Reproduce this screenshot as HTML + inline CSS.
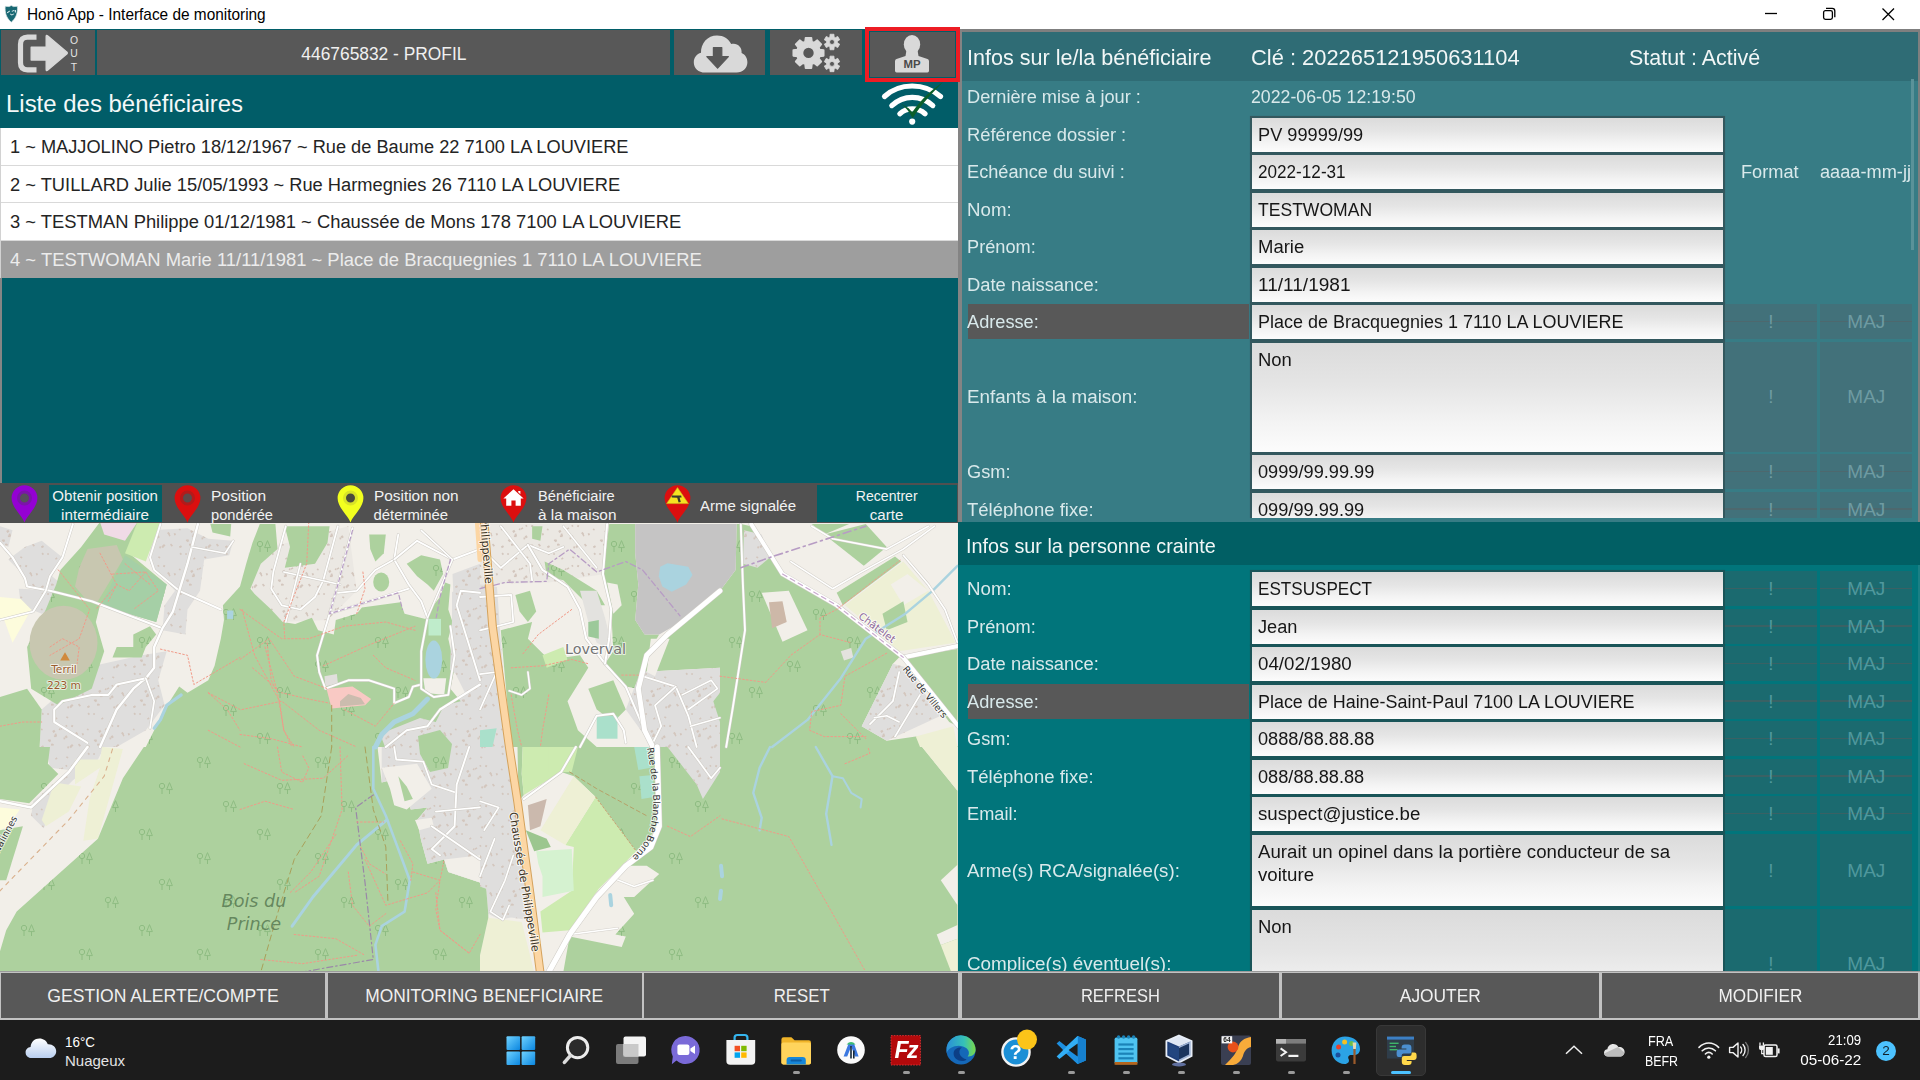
<!DOCTYPE html>
<html lang="fr"><head><meta charset="utf-8">
<title>Honō App - Interface de monitoring</title>
<style>

*{box-sizing:border-box;margin:0;padding:0}
html,body{width:1920px;height:1080px;overflow:hidden;background:#fff}
#root{position:absolute;left:0;top:0;width:1920px;height:1080px;overflow:hidden;opacity:.999}
body{position:relative;font-family:"Liberation Sans",sans-serif;color:#fff;-webkit-font-smoothing:antialiased}
.a{position:absolute}
.t{position:absolute;white-space:nowrap;line-height:1}
svg{position:absolute;overflow:visible}
/* title bar */
#tb{left:0;top:0;width:1920px;height:29px;background:#fff;color:#000}
#tb .ttl{left:27.4px;top:0;height:29px;line-height:29px;font-size:15.7px;color:#000;transform:scaleX(.981);transform-origin:left center}
/* left */
#left{left:0;top:29px;width:958px;height:942px;background:#005d68;overflow:hidden}
.gbtn{background:#585858}
#lhead{left:6.4px;top:60px;font-size:24.6px;line-height:30px;color:#f4f8f8}
#list{left:0;top:99px;width:958px;height:150px;background:#fff;border-left:1px solid #d2d2d2}
.li{left:0;width:957px;height:37.5px;line-height:37.5px;color:#242424;font-size:19.2px;padding-left:8.6px;white-space:nowrap;border-bottom:1px solid #d9d9d9}
.li.sel{background:#9e9e9e;color:#ececec;border-bottom:none}
#legend{left:0;top:453.5px;width:958px;height:40.2px;background:#505050;z-index:2}
.lg{font-size:14.9px;line-height:19.2px;color:#f2f2f2;white-space:nowrap;position:absolute}
.tbtn{background:#005f66;position:absolute;text-align:center}
#map{left:0;top:493px;width:958px;height:449px;background:#f2efe9;overflow:hidden}
/* splitter */
#split{left:957.5px;top:29px;width:5px;height:493px;background:#848484}
/* right top */
#rt{left:962px;top:29px;width:958px;height:493px;background:#377c85;overflow:hidden}
#rthead{left:0;top:2px;width:958px;height:49px;background:#2f6c75}
#rb{left:957.5px;top:522px;width:962.5px;height:449px;background:#00757b;overflow:hidden}
#rbhead{left:0;top:0;width:962.5px;height:42.5px;background:#005f64}
.h{font-size:22px;color:#f2f7f7}
.lb{font-size:19.2px;color:#d9e9eb}
.f{position:absolute;background:linear-gradient(#dbdbdb 0%,#e5e5e5 38%,#f3f3f3 72%,#fcfcfc 100%);color:#161616;font-size:19.2px;padding:4.9px 0 0 6px;line-height:23px;white-space:nowrap;overflow:hidden}
.d{position:absolute;text-align:center;font-size:19px;white-space:nowrap}
.d1{background:#42717a;color:#6e9ba2}
.d2{background:#1b6a6f;color:#4f989d}
.d{z-index:0}
.d i{position:absolute;left:0;right:0;top:50%;height:1.5px;margin-top:-1px;display:block;z-index:-1}
.d1 i{background:#4d686e}
.d2 i{background:#3a6164}
/* bottom buttons */
#bb{left:0;top:971px;width:1920px;height:49px;background:#c2c2c2}
.bbtn{position:absolute;top:1.5px;height:45.5px;background:#585858;text-align:center;line-height:46px;font-size:19px;color:#f0f0f0;white-space:nowrap}
/* taskbar */
#task{left:0;top:1020px;width:1920px;height:60px;background:#1c1c1c;font-family:"Liberation Sans",sans-serif}
#rt .f{box-shadow:0 0 .7px 1.75px #33585e}
#rb .f{box-shadow:0 0 .7px 1.75px #1a5559}

</style></head>
<body><div id="root">
<div id="tb" class="a">
<svg style="left:4.4px;top:4.8px" width="15" height="18" viewBox="0 0 15 18"><path d="M7.3 .5 L9.4 1.6 L13.4 1.3 C13.9 7.2 12.4 13.2 7.3 17.2 C2.2 13.2 .7 7.2 1.2 1.3 L5.2 1.6 Z" fill="#186873" stroke="#dfe9ea" stroke-width=".7"/><path d="M2.8 7.4 L5.6 5.6 L5.9 6.4 L3.4 8.2Z M7.6 6 L10 4.9 L10.4 5.8 L8 6.8Z M10.6 5.2 L12 5 L11.9 7.6 L10.9 7.6Z M6.4 8.6 L7.8 9.6 L10 8.4 L10.3 9 L7.8 10.6 L6 9.2Z" fill="#e4eff0"/></svg>
<div class="t ttl">Honō App - Interface de monitoring</div>
<svg style="left:1764px;top:6px" width="150" height="18" viewBox="0 0 150 18" fill="none" stroke="#000" stroke-width="1.3">
<path d="M1 7.5H13"/>
<rect x="59.6" y="4.6" width="8.8" height="8.8" rx="1.8"/><path d="M62 2.4H68.2Q70.8 2.4 70.8 5V11.2"/>
<path d="M118.5 2.5L130 14M130 2.5L118.5 14"/>
</svg>
</div>
<div id="left" class="a">
<div class="a gbtn" style="left:1.3px;top:.6px;width:93.4px;height:45.7px"></div>
<div class="a gbtn" style="left:97.3px;top:.6px;width:572.7px;height:45.7px"></div>
<div class="a gbtn" style="left:673.9px;top:.6px;width:91.6px;height:45.7px"></div>
<div class="a gbtn" style="left:769.5px;top:.6px;width:92px;height:45.7px"></div>
<div class="a gbtn" style="left:870px;top:3px;width:85px;height:44.5px"></div>
<svg style="left:0;top:0" width="96" height="48" viewBox="0 0 96 48"><path d="M36.5 8.2H27.5Q20.5 8.2 20.5 15.2V33.8Q20.5 40.8 27.5 40.8H36.5" fill="none" stroke="#d9d9d9" stroke-width="5.2"/><path d="M31.2 18.3H46.2V7.6Q46.2 5.6 47.8 7L67 23.2Q67.6 24 67 24.8L47.8 41Q46.2 42.4 46.2 40.4V31H31.2Z" fill="#d9d9d9" stroke="#d9d9d9" stroke-width="1.4" stroke-linejoin="round"/><g font-family="Liberation Sans,sans-serif" font-size="10.4" fill="#e4e4e4" text-anchor="middle"><text x="74" y="15.4">O</text><text x="74" y="28.2">U</text><text x="74" y="41.8">T</text></g></svg>
<div class="t" style="left:97.3px;top:1px;width:572.7px;height:45px;line-height:47.5px;text-align:center;font-size:18.3px;color:#f0f0f0"><span style="display:inline-block;transform:scaleX(0.950);transform-origin:center center">446765832 - PROFIL</span></div>
<svg style="left:673.5px;top:1px" width="92" height="45" viewBox="0 0 92 45"><path d="M31 42.5 C24.5 42.5 19.8 38.2 19.8 32.4 C19.8 27.6 22.8 24 27 22.8 C26.6 13.2 33.6 5.4 43 5.4 C49.6 5.4 54.6 8.8 57.2 14 C63 12.4 68.2 16.8 67.6 23 C71.4 24.6 73.4 28.2 73.4 32.2 C73.4 38 69 42.5 62.6 42.5Z" fill="#d9d9d9"/><path d="M39.4 17.6H47.8V26.6H54.4L43.6 38.2L32.8 26.6H39.4Z" fill="#585858" stroke="#585858" stroke-width="1.2" stroke-linejoin="round"/></svg>
<svg style="left:769.5px;top:1px" width="92" height="45" viewBox="0 0 92 45"><path d="M49.68 19.46 L53.72 19.96 L53.72 25.84 L49.68 26.34 L48.84 28.37 L51.34 31.58 L47.18 35.74 L43.97 33.24 L41.94 34.08 L41.44 38.12 L35.56 38.12 L35.06 34.08 L33.03 33.24 L29.82 35.74 L25.66 31.58 L28.16 28.37 L27.32 26.34 L23.28 25.84 L23.28 19.96 L27.32 19.46 L28.16 17.43 L25.66 14.22 L29.82 10.06 L33.03 12.56 L35.06 11.72 L35.56 7.68 L41.44 7.68 L41.94 11.72 L43.97 12.56 L47.18 10.06 L51.34 14.22 L48.84 17.43Z M44.50 22.90 A6.00 6.00 0 1 0 32.50 22.90 A6.00 6.00 0 1 0 44.50 22.90 Z" fill="#d9d9d9" fill-rule="evenodd" stroke="#d9d9d9" stroke-width="1.6" stroke-linejoin="round"/><path d="M67.45 12.75 L69.70 14.18 L67.73 17.58 L65.37 16.35 L64.08 17.09 L63.96 19.76 L60.04 19.76 L59.92 17.09 L58.63 16.35 L56.27 17.58 L54.30 14.18 L56.55 12.75 L56.55 11.25 L54.30 9.82 L56.27 6.42 L58.63 7.65 L59.92 6.91 L60.04 4.24 L63.96 4.24 L64.08 6.91 L65.37 7.65 L67.73 6.42 L69.70 9.82 L67.45 11.25Z M64.50 12.00 A2.50 2.50 0 1 0 59.50 12.00 A2.50 2.50 0 1 0 64.50 12.00 Z" fill="#d9d9d9" fill-rule="evenodd" stroke="#d9d9d9" stroke-width=".8" stroke-linejoin="round"/><path d="M67.45 34.65 L69.70 36.08 L67.73 39.48 L65.37 38.25 L64.08 38.99 L63.96 41.66 L60.04 41.66 L59.92 38.99 L58.63 38.25 L56.27 39.48 L54.30 36.08 L56.55 34.65 L56.55 33.15 L54.30 31.72 L56.27 28.32 L58.63 29.55 L59.92 28.81 L60.04 26.14 L63.96 26.14 L64.08 28.81 L65.37 29.55 L67.73 28.32 L69.70 31.72 L67.45 33.15Z M64.50 33.90 A2.50 2.50 0 1 0 59.50 33.90 A2.50 2.50 0 1 0 64.50 33.90 Z" fill="#d9d9d9" fill-rule="evenodd" stroke="#d9d9d9" stroke-width=".8" stroke-linejoin="round"/></svg>
<svg style="left:870px;top:3px" width="85" height="45" viewBox="0 0 85 45"><ellipse cx="42" cy="12.4" rx="8.2" ry="9.4" fill="#d9d9d9"/><path d="M36.5 18 L47.5 18 L48.5 24 L57.5 27 Q59 27.6 59 29.2 V38.8 Q59 40.4 57.4 40.4 H26.6 Q25 40.4 25 38.8 V29.2 Q25 27.6 26.5 27 L35.5 24Z" fill="#d9d9d9"/><text x="42" y="36.2" text-anchor="middle" font-family="Liberation Sans,sans-serif" font-weight="bold" font-size="11.4" fill="#4a4a4a">MP</text></svg>
<div id="lhead" class="t"><span style="display:inline-block;transform:scaleX(0.974);transform-origin:left center">Liste des bénéficiaires</span></div>
<svg style="left:878px;top:52px" width="70" height="46" viewBox="0 0 70 46"><g fill="none" stroke="#fff" stroke-width="5.2" stroke-linecap="round"><path d="M6.5 15.5 C21.5 1.5 46.5 1.5 62.5 15.5"/><path d="M13.8 24.6 C25.5 13.5 43 13.5 54.8 24.6"/><path d="M21.8 32.8 C28.8 26.3 39.8 26.3 47 32.8"/></g><circle cx="34.2" cy="40.6" r="3.1" fill="#fff"/><path d="M23 22.8 L30.6 27.2 L34.2 31.2 C44 17.5 54 8.5 65 1 C54 12 43 24 34.6 37.2 C31.8 31.6 28 26.6 23 22.8Z" fill="#0b5f2a"/></svg>
<div id="list" class="a">
<div class="a li" style="top:0px"><span style="display:inline-block;transform:scaleX(0.949);transform-origin:left center">1 ~ MAJJOLINO Pietro 18/12/1967 ~ Rue de Baume 22 7100 LA LOUVIERE</span></div>
<div class="a li" style="top:37.5px"><span style="display:inline-block;transform:scaleX(0.953);transform-origin:left center">2 ~ TUILLARD Julie 15/05/1993 ~ Rue Harmegnies 26 7110 LA LOUVIERE</span></div>
<div class="a li" style="top:75px"><span style="display:inline-block;transform:scaleX(0.957);transform-origin:left center">3 ~ TESTMAN Philippe 01/12/1981 ~ Chaussée de Mons 178 7100 LA LOUVIERE</span></div>
<div class="a li sel" style="top:112.5px"><span style="display:inline-block;transform:scaleX(0.960);transform-origin:left center">4 ~ TESTWOMAN Marie 11/11/1981 ~ Place de Bracquegnies 1 7110 LA LOUVIERE</span></div>
</div>
<div class="a" style="left:0;top:248.6px;width:2.3px;height:206px;background:#858585"></div>
<div id="legend" class="a">
<svg style="left:10.8px;top:2px" width="27" height="38" viewBox="0 0 27 38"><path d="M13.5 37.6 C11.5 31 .6 22.5 .6 13.2 A12.9 12.9 0 0 1 26.4 13.2 C26.4 22.5 15.5 31 13.5 37.6Z" fill="#9400d3"/><circle cx="13.5" cy="13" r="6" fill="#56505a" stroke="#7b14aa" stroke-width="3"/></svg>
<svg style="left:173.7px;top:2px" width="27" height="38" viewBox="0 0 27 38"><path d="M13.5 37.6 C11.5 31 .6 22.5 .6 13.2 A12.9 12.9 0 0 1 26.4 13.2 C26.4 22.5 15.5 31 13.5 37.6Z" fill="#dc0f0f"/><circle cx="13.5" cy="13" r="6" fill="#5e4a4a" stroke="#b41a1a" stroke-width="3"/></svg>
<svg style="left:336.9px;top:2px" width="27" height="38" viewBox="0 0 27 38"><path d="M13.5 37.6 C11.5 31 .6 22.5 .6 13.2 A12.9 12.9 0 0 1 26.4 13.2 C26.4 22.5 15.5 31 13.5 37.6Z" fill="#f2ff1f"/><circle cx="13.5" cy="13" r="6" fill="#4a4a3c" stroke="#d9e428" stroke-width="3"/></svg>
<svg style="left:500.2px;top:2px" width="27" height="38" viewBox="0 0 27 38"><path d="M13.5 37.6 C11.5 31 .6 22.5 .6 13.2 A12.9 12.9 0 0 1 26.4 13.2 C26.4 22.5 15.5 31 13.5 37.6Z" fill="#dc0f0f"/><path d="M13.5 4.2 L23.6 13.4 H20.8 V20.8 H15.6 V15.4 H11.4 V20.8 H6.2 V13.4 H3.4Z M18.2 6 H20.4 V9.2 L18.2 7.2Z" fill="#fff"/></svg>
<svg style="left:663.5px;top:2px" width="27" height="38" viewBox="0 0 27 38"><path d="M13.5 37.6 C11.5 31 .6 22.5 .6 13.2 A12.9 12.9 0 0 1 26.4 13.2 C26.4 22.5 15.5 31 13.5 37.6Z" fill="#dc0f0f"/><path d="M13.5 2.6 L24.4 18.6 H2.6Z" fill="#f5e322" stroke="#c9b81a" stroke-width=".6"/><path d="M7.6 10.4 L17.2 10.6 L17.6 12.4 L15.6 12.6 L16.8 17 L14.6 17.4 L13.2 12.8 L7.8 12.4Z" fill="#3a3a2a"/></svg>
<div class="tbtn" style="left:49px;top:2.5px;width:113px;height:37px"></div>
<div class="lg" style="left:49px;top:4px;width:113px;text-align:center"><span style="display:inline-block;transform:scaleX(1.012);transform-origin:center center">Obtenir position</span><br><span style="display:inline-block;transform:scaleX(1.022);transform-origin:center center">intermédiaire</span></div>
<div class="lg" style="left:211px;top:4px"><span style="display:inline-block;transform:scaleX(1.040);transform-origin:left center">Position</span><br><span style="display:inline-block;transform:scaleX(0.985);transform-origin:left center">pondérée</span></div>
<div class="lg" style="left:373.5px;top:4px"><span style="display:inline-block;transform:scaleX(1.032);transform-origin:left center">Position non</span><br>déterminée</div>
<div class="lg" style="left:537.5px;top:4px"><span style="display:inline-block;transform:scaleX(0.986);transform-origin:left center">Bénéficiaire</span><br><span style="display:inline-block;transform:scaleX(1.030);transform-origin:left center">à la maison</span></div>
<div class="lg" style="left:700.3px;top:14.6px"><span style="display:inline-block;transform:scaleX(1.009);transform-origin:left center">Arme signalée</span></div>
<div class="tbtn" style="left:817px;top:2.5px;width:140px;height:37px"></div>
<div class="lg" style="left:817px;top:4px;width:140px;text-align:center"><span style="display:inline-block;transform:scaleX(0.945);transform-origin:center center">Recentrer</span><br><span style="display:inline-block;transform:scaleX(1.010);transform-origin:center center">carte</span></div>
</div>
<div id="map" class="a"><svg style="left:0;top:0" width="958" height="449" viewBox="0 0 958 449"><defs><pattern id="trees" patternUnits="userSpaceOnUse" width="118" height="96" x="10" y="6"><g fill="none" stroke="#8ebc82" stroke-width="1"><circle cx="14" cy="16" r="2.7"/><path d="M14 18.7V24"/><path d="M21.5 12.6L24.4 19.6H18.6ZM21.5 19.6V24"/></g><g fill="none" stroke="#8ebc82" stroke-width="1"><circle cx="72" cy="40" r="2.7"/><path d="M72 42.7V48"/><path d="M79.5 36.6L82.4 43.6H76.6ZM79.5 43.6V48"/></g><g fill="none" stroke="#8ebc82" stroke-width="1"><circle cx="34" cy="66" r="2.7"/><path d="M34 68.7V74"/><path d="M41.5 62.6L44.4 69.6H38.6ZM41.5 69.6V74"/></g><g fill="none" stroke="#8ebc82" stroke-width="1"><circle cx="98" cy="84" r="2.7"/><path d="M98 86.7V92"/><path d="M105.5 80.6L108.4 87.6H102.6ZM105.5 87.6V92"/></g></pattern><pattern id="bld" patternUnits="userSpaceOnUse" width="46" height="40"><rect x="14.6" y="6.4" width="2.4" height="1.5" fill="#d3c6bd" transform="rotate(-30 14.6 6.4)"/><rect x="5.0" y="22.0" width="2.7" height="1.6" fill="#d3c6bd" transform="rotate(0 5.0 22.0)"/><rect x="19.2" y="3.5" width="1.7" height="1.8" fill="#d3c6bd" transform="rotate(-30 19.2 3.5)"/><rect x="6.2" y="9.0" width="2.4" height="2.3" fill="#d3c6bd" transform="rotate(-30 6.2 9.0)"/><rect x="25.6" y="2.8" width="1.9" height="2.0" fill="#d3c6bd" transform="rotate(20 25.6 2.8)"/><rect x="13.2" y="6.2" width="1.7" height="1.7" fill="#d3c6bd" transform="rotate(20 13.2 6.2)"/><rect x="5.3" y="21.6" width="1.8" height="1.5" fill="#d3c6bd" transform="rotate(0 5.3 21.6)"/><rect x="24.7" y="23.3" width="2.2" height="1.9" fill="#d3c6bd" transform="rotate(45 24.7 23.3)"/><rect x="20.6" y="34.2" width="2.0" height="1.6" fill="#d3c6bd" transform="rotate(20 20.6 34.2)"/><rect x="30.4" y="9.8" width="2.3" height="1.9" fill="#d3c6bd" transform="rotate(45 30.4 9.8)"/><rect x="31.6" y="11.4" width="2.8" height="1.5" fill="#d3c6bd" transform="rotate(70 31.6 11.4)"/><rect x="7.9" y="13.3" width="2.7" height="1.8" fill="#d3c6bd" transform="rotate(0 7.9 13.3)"/><rect x="33.1" y="21.6" width="2.7" height="1.7" fill="#d3c6bd" transform="rotate(45 33.1 21.6)"/><rect x="26.0" y="21.9" width="2.1" height="2.2" fill="#d3c6bd" transform="rotate(45 26.0 21.9)"/><rect x="20.9" y="24.9" width="1.7" height="2.1" fill="#d3c6bd" transform="rotate(-30 20.9 24.9)"/><rect x="42.7" y="30.6" width="1.9" height="1.8" fill="#d3c6bd" transform="rotate(45 42.7 30.6)"/><rect x="1.9" y="17.6" width="1.8" height="1.5" fill="#d3c6bd" transform="rotate(0 1.9 17.6)"/><rect x="10.2" y="11.3" width="2.5" height="1.8" fill="#d3c6bd" transform="rotate(70 10.2 11.3)"/><rect x="4.4" y="17.2" width="2.3" height="2.3" fill="#d3c6bd" transform="rotate(70 4.4 17.2)"/><rect x="37.3" y="11.0" width="2.1" height="1.8" fill="#d3c6bd" transform="rotate(70 37.3 11.0)"/><rect x="41.2" y="6.4" width="1.8" height="1.6" fill="#d3c6bd" transform="rotate(20 41.2 6.4)"/><rect x="1.5" y="30.9" width="1.8" height="1.7" fill="#d3c6bd" transform="rotate(20 1.5 30.9)"/><rect x="18.6" y="14.3" width="2.3" height="2.4" fill="#d3c6bd" transform="rotate(-30 18.6 14.3)"/><rect x="40.9" y="24.6" width="2.5" height="1.9" fill="#d3c6bd" transform="rotate(-30 40.9 24.6)"/><rect x="17.5" y="15.4" width="1.7" height="2.0" fill="#d3c6bd" transform="rotate(0 17.5 15.4)"/><rect x="9.0" y="36.4" width="2.1" height="1.5" fill="#d3c6bd" transform="rotate(-30 9.0 36.4)"/></pattern></defs><polygon points="8.3,37.5 25.0,25.0 41.7,18.8 62.5,35.4 52.1,54.2 68.8,68.8 41.7,68.8 27.1,64.6 22.9,52.1" fill="#dfdedd"/><polygon points="8.3,37.5 25.0,25.0 41.7,18.8 62.5,35.4 52.1,54.2 68.8,68.8 41.7,68.8 27.1,64.6 22.9,52.1" fill="url(#bld)"/><polygon points="18.8,66.7 68.8,68.8 62.5,83.3 41.7,91.7 20.8,83.3" fill="#dfdedd"/><polygon points="18.8,66.7 68.8,68.8 62.5,83.3 41.7,91.7 20.8,83.3" fill="url(#bld)"/><polygon points="0.0,4.2 12.5,8.3 8.3,25.0 0.0,20.8" fill="#dfdedd"/><polygon points="0.0,4.2 12.5,8.3 8.3,25.0 0.0,20.8" fill="url(#bld)"/><polygon points="150.0,8.3 187.5,6.2 208.3,16.7 233.3,18.8 229.2,33.3 204.2,37.5 200.0,68.8 187.5,87.5 185.4,112.5 162.5,108.3 164.6,83.3 175.0,68.8 150.0,41.7" fill="#dfdedd"/><polygon points="150.0,8.3 187.5,6.2 208.3,16.7 233.3,18.8 229.2,33.3 204.2,37.5 200.0,68.8 187.5,87.5 185.4,112.5 162.5,108.3 164.6,83.3 175.0,68.8 150.0,41.7" fill="url(#bld)"/><polygon points="93.8,143.8 141.7,133.3 166.7,129.2 158.3,158.3 164.6,183.3 145.8,208.3 116.7,225.0 39.6,225.0 41.7,187.5 58.3,172.9 91.7,166.7" fill="#dfdedd"/><polygon points="93.8,143.8 141.7,133.3 166.7,129.2 158.3,158.3 164.6,183.3 145.8,208.3 116.7,225.0 39.6,225.0 41.7,187.5 58.3,172.9 91.7,166.7" fill="url(#bld)"/><polygon points="45.8,225.0 104.2,225.0 97.9,237.5 72.9,258.3 56.2,275.0 43.8,306.2 31.2,293.8 33.3,279.2 68.8,247.9 50.0,245.8" fill="#dfdedd"/><polygon points="45.8,225.0 104.2,225.0 97.9,237.5 72.9,258.3 56.2,275.0 43.8,306.2 31.2,293.8 33.3,279.2 68.8,247.9 50.0,245.8" fill="url(#bld)"/><polygon points="248.3,31.2 348.3,4.2 356.7,68.8 327.5,97.9 281.7,100.0 252.5,72.9" fill="#ebe8e3"/><polygon points="248.3,31.2 348.3,4.2 356.7,68.8 327.5,97.9 281.7,100.0 252.5,72.9" fill="url(#bld)"/><polygon points="452.5,52.1 480.0,41.7 480.0,225.0 385.8,225.0 398.3,208.3 427.5,200.0 448.3,183.3 465.0,170.8 452.5,145.8 454.6,100.0" fill="#dfdedd"/><polygon points="452.5,52.1 480.0,41.7 480.0,225.0 385.8,225.0 398.3,208.3 427.5,200.0 448.3,183.3 465.0,170.8 452.5,145.8 454.6,100.0" fill="url(#bld)"/><polygon points="480.0,62.5 492.5,62.5 511.2,225.0 480.0,225.0" fill="#dfdedd"/><polygon points="480.0,62.5 492.5,62.5 511.2,225.0 480.0,225.0" fill="url(#bld)"/><polygon points="480.0,2.1 609.2,2.1 605.0,52.1 548.8,60.4 480.0,62.5" fill="#ebe8e3"/><polygon points="480.0,2.1 609.2,2.1 605.0,52.1 548.8,60.4 480.0,62.5" fill="url(#bld)"/><polygon points="480.0,225.0 507.1,225.0 517.5,329.2 525.8,391.7 500.8,397.9 488.3,391.7 486.2,366.7 480.0,364.6" fill="#dfdedd"/><polygon points="480.0,225.0 507.1,225.0 517.5,329.2 525.8,391.7 500.8,397.9 488.3,391.7 486.2,366.7 480.0,364.6" fill="url(#bld)"/><polygon points="488.3,395.8 521.7,400.0 534.2,450.0 480.0,450.0 480.0,433.3" fill="#eef0d5"/><polygon points="75.0,237.5 100.0,237.5 102.1,225.0 122.9,227.1 97.9,316.7 83.3,318.8 89.6,277.1 100.0,245.8 75.0,262.5" fill="#eef0d5"/><polygon points="54.2,260.4 81.2,264.6 68.8,289.6 45.8,304.2 41.7,297.9" fill="#eef0d5"/><polygon points="0.0,285.4 19.8,287.5 8.3,304.2 0.0,308.3" fill="#fdfcdc"/><polygon points="0.0,75.0 20.8,77.1 31.2,87.5 12.5,120.8 4.2,97.9 0.0,95.8" fill="#fdfcdc"/><polygon points="100.0,0.0 145.8,0.0 129.2,31.2 166.7,62.5 156.2,100.0 100.0,83.3 95.8,100.0 104.2,129.2 91.7,166.7 58.3,183.3 31.2,166.7 27.1,125.0 45.8,87.5 56.2,62.5 60.4,47.9 81.2,25.0" fill="#add19e"/><polygon points="100.0,0.0 145.8,0.0 129.2,31.2 166.7,62.5 156.2,100.0 100.0,83.3 95.8,100.0 104.2,129.2 91.7,166.7 58.3,183.3 31.2,166.7 27.1,125.0 45.8,87.5 56.2,62.5 60.4,47.9 81.2,25.0" fill="url(#trees)"/><polygon points="133.3,112.5 150.0,104.2 156.2,112.5 145.8,125.0 141.7,135.4 112.5,135.4 116.7,125.0 133.3,125.0" fill="#add19e"/><polygon points="133.3,112.5 150.0,104.2 156.2,112.5 145.8,125.0 141.7,135.4 112.5,135.4 116.7,125.0 133.3,125.0" fill="url(#trees)"/><polygon points="0.0,225.0 50.0,225.0 47.9,241.7 58.3,252.1 29.2,281.2 0.0,277.1" fill="#add19e"/><polygon points="0.0,225.0 50.0,225.0 47.9,241.7 58.3,252.1 29.2,281.2 0.0,277.1" fill="url(#trees)"/><polygon points="0.0,175.0 27.1,166.7 41.7,187.5 39.6,225.0 0.0,225.0" fill="#add19e"/><polygon points="0.0,308.3 22.9,304.2 6.2,358.3 0.0,358.3" fill="#add19e"/><polygon points="210.4,2.1 231.2,2.1 230.2,14.6 212.5,10.4" fill="#add19e"/><polygon points="240.0,64.6 222.9,83.3 224.0,97.9 220.8,116.7 214.6,143.8 208.3,158.3 187.5,170.8 179.2,164.6 164.6,187.5 154.2,208.3 145.8,225.0 240.0,225.0" fill="#add19e"/><polygon points="240.0,64.6 222.9,83.3 224.0,97.9 220.8,116.7 214.6,143.8 208.3,158.3 187.5,170.8 179.2,164.6 164.6,187.5 154.2,208.3 145.8,225.0 240.0,225.0" fill="url(#trees)"/><polygon points="143.8,225.0 122.9,256.2 97.9,316.7 16.7,389.6 6.2,408.3 0.0,429.2 0.0,450.0 240.0,450.0 240.0,225.0" fill="#add19e"/><polygon points="143.8,225.0 122.9,256.2 97.9,316.7 16.7,389.6 6.2,408.3 0.0,429.2 0.0,450.0 240.0,450.0 240.0,225.0" fill="url(#trees)"/><polygon points="240.0,64.6 246.2,41.7 252.5,20.8 259.8,2.1 275.4,2.1 277.5,27.1 260.8,41.7 250.4,66.7 254.6,71.9 271.2,87.5 282.7,100.0 295.2,102.1 311.9,95.8 318.1,108.3 333.8,112.5 335.8,97.9 356.7,91.7 361.9,85.4 400.4,80.2 404.6,91.7 425.4,96.9 431.7,85.4 440.0,75.0 445.2,60.4 450.4,62.5 448.3,87.5 452.5,100.0 448.3,116.7 454.6,145.8 450.4,166.7 460.8,179.2 444.2,183.3 435.8,200.0 421.2,208.3 419.2,225.0 240.0,225.0" fill="#add19e"/><polygon points="240.0,64.6 246.2,41.7 252.5,20.8 259.8,2.1 275.4,2.1 277.5,27.1 260.8,41.7 250.4,66.7 254.6,71.9 271.2,87.5 282.7,100.0 295.2,102.1 311.9,95.8 318.1,108.3 333.8,112.5 335.8,97.9 356.7,91.7 361.9,85.4 400.4,80.2 404.6,91.7 425.4,96.9 431.7,85.4 440.0,75.0 445.2,60.4 450.4,62.5 448.3,87.5 452.5,100.0 448.3,116.7 454.6,145.8 450.4,166.7 460.8,179.2 444.2,183.3 435.8,200.0 421.2,208.3 419.2,225.0 240.0,225.0" fill="url(#trees)"/><polygon points="240.0,225.0 377.5,225.0 381.7,260.4 398.3,256.2 402.5,266.7 410.8,287.5 427.5,285.4 417.1,297.9 421.2,318.8 427.5,341.7 444.2,337.5 448.3,350.0 480.0,360.4 480.0,450.0 240.0,450.0" fill="#add19e"/><polygon points="240.0,225.0 377.5,225.0 381.7,260.4 398.3,256.2 402.5,266.7 410.8,287.5 427.5,285.4 417.1,297.9 421.2,318.8 427.5,341.7 444.2,337.5 448.3,350.0 480.0,360.4 480.0,450.0 240.0,450.0" fill="url(#trees)"/><polygon points="609.2,2.1 635.2,2.1 635.2,31.2 638.3,62.5 635.2,97.9 644.6,112.5 659.2,112.5 646.7,133.3 638.3,166.7 625.8,164.6 605.0,141.7 613.3,129.2 611.2,87.5 602.9,52.1" fill="#add19e"/><polygon points="609.2,2.1 635.2,2.1 635.2,31.2 638.3,62.5 635.2,97.9 644.6,112.5 659.2,112.5 646.7,133.3 638.3,166.7 625.8,164.6 605.0,141.7 613.3,129.2 611.2,87.5 602.9,52.1" fill="url(#trees)"/><polygon points="720.0,68.8 720.0,145.8 640.4,150.0 646.7,133.3 667.5,112.5" fill="#add19e"/><polygon points="571.7,225.0 657.1,225.0 659.2,304.2 636.2,329.2 595.6,275.0 573.8,254.2 561.2,250.0" fill="#add19e"/><polygon points="571.7,225.0 657.1,225.0 659.2,304.2 636.2,329.2 595.6,275.0 573.8,254.2 561.2,250.0" fill="url(#trees)"/><polygon points="657.1,225.0 720.0,225.0 720.0,450.0 563.3,450.0 569.6,414.6 621.7,425.0 625.8,414.6 615.4,412.5 634.2,391.7 623.8,375.0 634.2,375.0 659.2,352.1 646.7,343.8 625.8,343.8 650.8,325.0 659.2,304.2" fill="#add19e"/><polygon points="657.1,225.0 720.0,225.0 720.0,450.0 563.3,450.0 569.6,414.6 621.7,425.0 625.8,414.6 615.4,412.5 634.2,391.7 623.8,375.0 634.2,375.0 659.2,352.1 646.7,343.8 625.8,343.8 650.8,325.0 659.2,304.2" fill="url(#trees)"/><polygon points="517.5,225.0 522.7,225.0 521.7,252.1 523.8,272.9 518.5,279.2" fill="#add19e"/><polygon points="740.8,2.1 751.2,4.2 782.5,52.1 836.7,83.3 901.2,133.3 892.9,141.7 861.7,204.2 886.7,218.8 915.8,214.6 960.0,225.0 720.0,225.0 720.0,68.8 735.6,47.9 736.7,2.1" fill="#add19e"/><polygon points="740.8,2.1 751.2,4.2 782.5,52.1 836.7,83.3 901.2,133.3 892.9,141.7 861.7,204.2 886.7,218.8 915.8,214.6 960.0,225.0 720.0,225.0 720.0,68.8 735.6,47.9 736.7,2.1" fill="url(#trees)"/><polygon points="720.0,225.0 922.1,225.0 957.5,268.8 957.5,450.0 720.0,450.0" fill="#add19e"/><polygon points="500.8,108.3 532.1,100.0 527.9,116.7 548.8,137.5 580.0,133.3 588.3,145.8 567.5,179.2 577.9,208.3 596.7,225.0 511.2,225.0" fill="#add19e"/><polygon points="500.8,108.3 532.1,100.0 527.9,116.7 548.8,137.5 580.0,133.3 588.3,145.8 567.5,179.2 577.9,208.3 596.7,225.0 511.2,225.0" fill="url(#trees)"/><polygon points="588.3,166.7 613.3,158.3 625.8,187.5 613.3,200.0 596.7,187.5" fill="#add19e"/><polygon points="515.4,72.9 530.0,68.8 536.2,89.6 527.9,100.0 519.6,89.6" fill="#add19e"/><polygon points="544.6,39.6 563.3,47.9 596.7,68.8 605.0,83.3 588.3,83.3 563.3,58.3 546.7,54.2" fill="#add19e"/><polygon points="544.6,39.6 563.3,47.9 596.7,68.8 605.0,83.3 588.3,83.3 563.3,58.3 546.7,54.2" fill="url(#trees)"/><polygon points="532.1,4.2 542.5,4.2 540.4,18.8 532.1,16.7" fill="#add19e"/><polygon points="284.8,4.2 329.6,4.2 327.5,20.8 315.0,41.7 300.4,43.8 284.8,45.8 290.0,25.0" fill="#add19e"/><polygon points="284.8,4.2 329.6,4.2 327.5,20.8 315.0,41.7 300.4,43.8 284.8,45.8 290.0,25.0" fill="url(#trees)"/><polygon points="369.2,12.5 385.8,12.5 383.8,31.2 375.4,39.6 370.2,27.1" fill="#add19e"/><polygon points="406.7,41.7 421.2,33.3 440.0,37.5 443.1,52.1 433.8,68.8 427.5,62.5 417.1,54.2" fill="#add19e"/><polygon points="406.7,41.7 421.2,33.3 440.0,37.5 443.1,52.1 433.8,68.8 427.5,62.5 417.1,54.2" fill="url(#trees)"/><ellipse cx="381.2" cy="60.0" rx="8" ry="9.4" fill="#add19e"/><polygon points="811.7,2.1 849.2,2.1 824.2,12.5" fill="#add19e"/><polygon points="824.2,12.5 865.8,2.1 886.7,25.0 863.8,43.8" fill="#add19e"/><polygon points="836.7,70.8 895.0,34.4 901.2,39.6 842.9,83.3" fill="#add19e"/><polygon points="882.5,91.7 903.3,79.2 907.5,100.0 886.7,108.3" fill="#add19e"/><polygon points="903.3,135.4 957.5,127.1 957.5,204.2 949.2,200.0" fill="#add19e"/><polygon points="419.2,225.0 458.8,225.0 456.7,237.5 440.0,247.9 427.5,237.5" fill="#add19e"/><polygon points="480.0,364.6 486.2,366.7 488.3,391.7 488.3,395.8 480.0,433.3" fill="#add19e"/><polygon points="452.0,70.0 478.0,62.0 497.0,65.0 503.0,150.0 518.0,280.0 528.0,398.0 495.0,393.0 480.0,348.0 430.0,328.0 435.0,268.0 460.0,218.0 475.0,163.0 450.0,148.0 452.0,98.0" fill="#dfdedd"/><polygon points="452.0,70.0 478.0,62.0 497.0,65.0 503.0,150.0 518.0,280.0 528.0,398.0 495.0,393.0 480.0,348.0 430.0,328.0 435.0,268.0 460.0,218.0 475.0,163.0 450.0,148.0 452.0,98.0" fill="url(#bld)"/><polygon points="381.7,225.0 480.0,225.0 480.0,360.4 448.3,350.0 444.2,337.5 427.5,341.7 421.2,318.8 417.1,297.9 427.5,285.4 410.8,287.5 402.5,266.7 398.3,256.2 381.7,260.4" fill="#dfdedd"/><polygon points="381.7,225.0 480.0,225.0 480.0,360.4 448.3,350.0 444.2,337.5 427.5,341.7 421.2,318.8 417.1,297.9 427.5,285.4 410.8,287.5 402.5,266.7 398.3,256.2 381.7,260.4" fill="url(#bld)"/><polygon points="380.0,212.0 420.0,196.0 455.0,205.0 470.0,225.0 430.0,240.0 395.0,250.0" fill="#dfdedd"/><polygon points="380.0,212.0 420.0,196.0 455.0,205.0 470.0,225.0 430.0,240.0 395.0,250.0" fill="url(#bld)"/><polygon points="418.0,214.0 440.0,208.0 452.0,222.0 448.0,246.0 430.0,250.0 420.0,232.0" fill="#add19e"/><polygon points="418.0,214.0 440.0,208.0 452.0,222.0 448.0,246.0 430.0,250.0 420.0,232.0" fill="url(#trees)"/><polygon points="845.0,83.3 903.3,39.6 928.3,68.8 949.2,108.3 955.4,120.8 899.2,129.2" fill="#eef0d5"/><polygon points="890.8,62.5 907.5,52.1 928.3,68.8 903.3,83.3" fill="#f2efe9"/><polygon points="882.5,91.7 903.3,79.2 907.5,100.0 886.7,108.3" fill="#add19e"/><polygon points="915.8,214.6 953.3,204.2 957.5,225.0 920.0,225.0" fill="#eef0d5"/><polygon points="922.1,225.0 957.5,225.0 957.5,268.8" fill="#eef0d5"/><polygon points="940.8,358.3 957.5,342.7 957.5,383.3" fill="#f2efe9"/><polygon points="936.7,412.5 957.5,403.1 957.5,416.7 940.8,422.9" fill="#f2efe9"/><polygon points="940.8,422.9 957.5,416.7 957.5,450.0 951.2,450.0" fill="#eef0d5"/><polygon points="761.7,70.8 788.8,68.8 807.5,108.3 782.5,119.8" fill="#f2efe9"/><polygon points="769.0,80.2 782.5,79.2 786.7,100.0 772.1,106.2" fill="#cdb8a8"/><polygon points="840.8,129.2 851.2,126.0 853.3,135.4 844.0,138.5" fill="#e4e2de"/><polygon points="892.9,141.7 907.5,145.8 928.3,177.1 940.8,193.8 886.7,218.8 861.7,204.2" fill="#dfdedd"/><polygon points="892.9,141.7 907.5,145.8 928.3,177.1 940.8,193.8 886.7,218.8 861.7,204.2" fill="url(#bld)"/><polygon points="522.7,225.0 571.7,225.0 561.2,250.0 523.8,272.9 521.7,252.1" fill="#cdebb0"/><polygon points="595.6,275.0 636.2,329.2 598.8,366.7 569.6,408.3 542.5,410.4 540.4,389.6 571.7,368.8 573.8,325.0 565.4,322.9" fill="#cdebb0"/><polygon points="573.8,254.2 595.6,275.0 565.4,322.9 540.4,308.3" fill="#eef0d5"/><polygon points="525.8,308.3 546.7,316.7 550.8,325.0 534.2,329.2" fill="#9cc68f"/><polygon points="536.2,329.2 571.7,327.1 573.8,368.8 542.5,375.0 542.5,354.2 538.3,341.7" fill="#d5f2d0"/><polygon points="527.9,283.3 546.7,277.1 540.4,304.2 530.0,308.3" fill="#cbb9ad"/><polygon points="634.2,225.0 648.8,225.0 650.8,245.8 638.3,247.9" fill="#aae0cb"/><polygon points="639.4,254.2 652.9,253.1 654.0,275.0 641.5,277.1" fill="#aae0cb"/><polygon points="596.7,193.8 617.5,193.8 617.5,216.7 596.7,216.7" fill="#aae0cb"/><polygon points="480.0,208.3 496.7,206.2 492.5,225.0 480.0,225.0" fill="#aae0cb"/><polygon points="667.5,225.0 720.0,225.0 720.0,250.0 702.9,277.1 696.7,262.5" fill="#dfdedd"/><polygon points="667.5,225.0 720.0,225.0 720.0,250.0 702.9,277.1 696.7,262.5" fill="url(#bld)"/><polygon points="640.4,150.0 720.0,145.8 720.0,225.0 652.9,225.0 625.8,187.5" fill="#dfdedd"/><polygon points="640.4,150.0 720.0,145.8 720.0,225.0 652.9,225.0 625.8,187.5" fill="url(#bld)"/><polygon points="713.3,179.2 720.0,170.8 720.0,200.0" fill="#add19e"/><polygon points="580.0,68.8 596.7,68.8 605.0,95.8 613.3,129.2 596.7,120.8 588.3,100.0" fill="#e3e2df"/><polygon points="588.3,100.0 598.8,97.9 598.8,116.7 588.3,114.6" fill="#9cc99a"/><polygon points="607.1,60.4 617.5,62.5 621.7,83.3 613.3,91.7" fill="#f2efe9"/><polygon points="650.8,116.7 669.6,116.7 655.0,154.2 646.7,150.0" fill="#f2efe9"/><polygon points="542.5,133.3 563.3,125.0 567.5,137.5 546.7,145.8" fill="#cdebb0"/><polygon points="548.8,225.0 577.9,225.0 571.7,250.0 548.8,250.0" fill="#cdebb0"/><polygon points="87.5,27.1 116.7,22.9 122.9,37.5 97.9,79.2 87.5,79.2 75.0,64.6 79.2,45.8" fill="#c8c7b0"/><ellipse cx="63.5" cy="120.8" rx="34" ry="37" fill="#c8c7b0"/><polygon points="125.0,33.3 166.7,62.5 156.2,100.0 100.0,83.3 108.3,68.8" fill="#a5cfa6"/><polygon points="137.5,0.0 160.4,0.0 145.8,39.6 125.0,31.2" fill="#cdebb0"/><polygon points="100.0,0.0 137.5,0.0 125.0,18.8 104.2,12.5" fill="#f0dbe6"/><polygon points="326.5,166.7 352.5,164.6 371.2,177.1 365.0,183.3 331.7,186.5" fill="#f9c9c4"/><polygon points="340.0,179.2 348.3,171.9 360.8,176.0 365.0,182.3 340.0,184.4" fill="#cbbcae"/><polygon points="324.4,154.2 336.9,152.1 337.9,161.5 325.4,164.6" fill="#e1dfdc"/><polygon points="428.5,96.9 441.0,96.9 441.0,113.5 428.5,113.5" fill="#bfeccb"/><polygon points="423.3,156.2 446.2,156.2 444.2,172.9 425.4,170.8" fill="#f2efe9"/><polygon points="635.2,2.1 720.0,2.1 720.0,68.8 688.3,95.8 659.2,112.5 644.6,112.5 635.2,97.9 638.3,62.5 635.2,31.2" fill="#c5c4c4"/><polygon points="720.0,2.1 736.7,2.1 735.6,47.9 720.0,68.8" fill="#c5c4c4"/><polygon points="744.0,8.3 761.7,12.5 770.0,35.4 757.5,45.8 742.9,41.7" fill="#dfdedd"/><polygon points="744.0,8.3 761.7,12.5 770.0,35.4 757.5,45.8 742.9,41.7" fill="url(#bld)"/><polygon points="381.7,245.8 417.1,241.7 431.7,266.7 406.7,287.5 394.2,283.3 390.0,266.7" fill="#f2efe9"/><polygon points="398.3,254.2 406.7,264.6 412.9,277.1 404.6,279.2" fill="#add19e"/><polygon points="415.0,297.9 431.7,295.8 433.8,304.2 419.2,308.3" fill="#f2efe9"/><polygon points="444.2,337.5 480.0,333.3 480.0,360.4 448.3,350.0" fill="#f2efe9"/><ellipse cx="433.8" cy="137.5" rx="8.4" ry="19" fill="#aad3df"/><polygon points="660.2,44.8 667.5,41.2 688.3,44.8 692.5,53.1 686.2,62.5 671.7,69.8 662.3,64.6 658.8,54.2" fill="#aad3df"/><polyline points="427.5,177.1 412.9,191.7 394.2,200.0 381.7,212.5 375.4,225.0" fill="none" stroke="#aad3df" stroke-width="5" stroke-linejoin="round" stroke-linecap="round"/><polyline points="181.2,172.9 166.7,183.3 160.4,197.9 154.2,206.2" fill="none" stroke="#aad3df" stroke-width="3.2" stroke-linejoin="round" stroke-linecap="round"/><polyline points="373.3,225.0 373.3,266.7 385.8,293.8 398.3,327.1 409.8,358.3 404.6,389.6 381.7,404.2 375.4,422.9 378.5,450.0" fill="none" stroke="#aad3df" stroke-width="2.6" stroke-linejoin="round" stroke-linecap="round"/><polyline points="386.9,297.9 356.7,322.9 312.9,375.0 292.1,404.2" fill="none" stroke="#aad3df" stroke-width="3" stroke-linejoin="round" stroke-linecap="round"/><polyline points="957.5,43.8 932.5,68.8 905.4,91.7 865.8,116.7 840.8,156.2 807.5,197.9 772.1,225.0" fill="none" stroke="#aad3df" stroke-width="2.4" stroke-linejoin="round" stroke-linecap="round"/><polyline points="770.0,225.0 759.6,245.8 753.3,270.8 761.7,295.8 759.6,308.3" fill="none" stroke="#aad3df" stroke-width="2.4" stroke-linejoin="round" stroke-linecap="round"/><polyline points="815.8,225.0 832.5,254.2 826.2,291.7 831.5,322.9" fill="none" stroke="#aad3df" stroke-width="2.4" stroke-linejoin="round" stroke-linecap="round"/><polyline points="832.5,254.2 842.9,256.2 851.2,270.8 861.7,277.1 860.6,285.4" fill="none" stroke="#aad3df" stroke-width="2" stroke-linejoin="round" stroke-linecap="round"/><polygon points="227.1,88.5 233.3,88.5 233.3,96.9 227.1,96.9" fill="#aad3df"/><polyline points="610.2,372.9 611.2,383.3" fill="none" stroke="#aad3df" stroke-width="4" stroke-linejoin="round" stroke-linecap="round"/><polyline points="721.0,343.8 722.1,354.2" fill="none" stroke="#aad3df" stroke-width="4" stroke-linejoin="round" stroke-linecap="round"/><polyline points="721.0,368.8 720.0,377.1" fill="none" stroke="#aad3df" stroke-width="4" stroke-linejoin="round" stroke-linecap="round"/><polyline points="0.0,20.8 12.5,35.4 25.0,56.2 27.1,64.6 50.0,68.8 91.7,79.2 162.5,106.2" fill="none" stroke="#cfccc6" stroke-width="3.08" stroke-linejoin="round" stroke-linecap="round"/><polyline points="0.0,20.8 12.5,35.4 25.0,56.2 27.1,64.6 50.0,68.8 91.7,79.2 162.5,106.2" fill="none" stroke="#ffffff" stroke-width="2.08" stroke-linejoin="round" stroke-linecap="round"/><polyline points="72.9,2.1 62.5,35.4 50.0,54.2 45.8,68.8 33.3,89.6 0.0,97.9" fill="none" stroke="#cfccc6" stroke-width="2.92" stroke-linejoin="round" stroke-linecap="round"/><polyline points="72.9,2.1 62.5,35.4 50.0,54.2 45.8,68.8 33.3,89.6 0.0,97.9" fill="none" stroke="#ffffff" stroke-width="1.92" stroke-linejoin="round" stroke-linecap="round"/><polyline points="160.4,2.1 150.0,35.4 154.2,47.9 179.2,68.8 220.8,87.5" fill="none" stroke="#cfccc6" stroke-width="2.92" stroke-linejoin="round" stroke-linecap="round"/><polyline points="160.4,2.1 150.0,35.4 154.2,47.9 179.2,68.8 220.8,87.5" fill="none" stroke="#ffffff" stroke-width="1.92" stroke-linejoin="round" stroke-linecap="round"/><polyline points="197.9,2.1 187.5,41.7 179.2,68.8 172.9,89.6 162.5,106.2 154.2,125.0 154.2,145.8 145.8,156.2 133.3,166.7 116.7,187.5 100.0,225.0" fill="none" stroke="#cfccc6" stroke-width="3.4" stroke-linejoin="round" stroke-linecap="round"/><polyline points="197.9,2.1 187.5,41.7 179.2,68.8 172.9,89.6 162.5,106.2 154.2,125.0 154.2,145.8 145.8,156.2 133.3,166.7 116.7,187.5 100.0,225.0" fill="none" stroke="#ffffff" stroke-width="2.4" stroke-linejoin="round" stroke-linecap="round"/><polyline points="145.8,156.2 116.7,162.5 108.3,172.9 91.7,172.9 62.5,179.2 54.2,187.5 54.2,200.0 87.5,220.8" fill="none" stroke="#cfccc6" stroke-width="3.08" stroke-linejoin="round" stroke-linecap="round"/><polyline points="145.8,156.2 116.7,162.5 108.3,172.9 91.7,172.9 62.5,179.2 54.2,187.5 54.2,200.0 87.5,220.8" fill="none" stroke="#ffffff" stroke-width="2.08" stroke-linejoin="round" stroke-linecap="round"/><polyline points="145.8,156.2 154.2,179.2 150.0,206.2" fill="none" stroke="#cfccc6" stroke-width="2.76" stroke-linejoin="round" stroke-linecap="round"/><polyline points="145.8,156.2 154.2,179.2 150.0,206.2" fill="none" stroke="#ffffff" stroke-width="1.76" stroke-linejoin="round" stroke-linecap="round"/><polyline points="191.7,25.0 225.0,31.2 233.3,18.8" fill="none" stroke="#cfccc6" stroke-width="2.6" stroke-linejoin="round" stroke-linecap="round"/><polyline points="191.7,25.0 225.0,31.2 233.3,18.8" fill="none" stroke="#ffffff" stroke-width="1.6" stroke-linejoin="round" stroke-linecap="round"/><polyline points="87.5,225.0 68.8,250.0 31.2,285.4 0.0,279.2" fill="none" stroke="#cfccc6" stroke-width="3.56" stroke-linejoin="round" stroke-linecap="round"/><polyline points="87.5,225.0 68.8,250.0 31.2,285.4 0.0,279.2" fill="none" stroke="#ffffff" stroke-width="2.56" stroke-linejoin="round" stroke-linecap="round"/><polyline points="285.8,4.2 273.3,50.0 271.2,66.7 281.7,83.3 300.4,87.5 315.0,75.0 323.3,58.3 337.9,4.2" fill="none" stroke="#cfccc6" stroke-width="2.76" stroke-linejoin="round" stroke-linecap="round"/><polyline points="285.8,4.2 273.3,50.0 271.2,66.7 281.7,83.3 300.4,87.5 315.0,75.0 323.3,58.3 337.9,4.2" fill="none" stroke="#ffffff" stroke-width="1.76" stroke-linejoin="round" stroke-linecap="round"/><polyline points="283.8,50.0 340.0,62.5" fill="none" stroke="#cfccc6" stroke-width="2.6" stroke-linejoin="round" stroke-linecap="round"/><polyline points="283.8,50.0 340.0,62.5" fill="none" stroke="#ffffff" stroke-width="1.6" stroke-linejoin="round" stroke-linecap="round"/><polyline points="300.4,41.7 285.8,100.0" fill="none" stroke="#cfccc6" stroke-width="2.6" stroke-linejoin="round" stroke-linecap="round"/><polyline points="300.4,41.7 285.8,100.0" fill="none" stroke="#ffffff" stroke-width="1.6" stroke-linejoin="round" stroke-linecap="round"/><polyline points="352.5,6.2 337.9,62.5 329.6,91.7 317.1,133.3 319.2,150.0 325.4,166.7 348.3,158.3 369.2,158.3 394.2,166.7 394.2,181.2 408.8,175.0 412.9,164.6 421.2,162.5" fill="none" stroke="#cfccc6" stroke-width="2.92" stroke-linejoin="round" stroke-linecap="round"/><polyline points="352.5,6.2 337.9,62.5 329.6,91.7 317.1,133.3 319.2,150.0 325.4,166.7 348.3,158.3 369.2,158.3 394.2,166.7 394.2,181.2 408.8,175.0 412.9,164.6 421.2,162.5" fill="none" stroke="#ffffff" stroke-width="1.92" stroke-linejoin="round" stroke-linecap="round"/><polyline points="329.6,91.7 369.2,79.2 408.8,66.7" fill="none" stroke="#cfccc6" stroke-width="2.76" stroke-linejoin="round" stroke-linecap="round"/><polyline points="329.6,91.7 369.2,79.2 408.8,66.7" fill="none" stroke="#ffffff" stroke-width="1.76" stroke-linejoin="round" stroke-linecap="round"/><polyline points="337.9,70.8 356.7,68.8 375.4,47.9 394.2,37.5 398.3,12.5" fill="none" stroke="#cfccc6" stroke-width="2.76" stroke-linejoin="round" stroke-linecap="round"/><polyline points="337.9,70.8 356.7,68.8 375.4,47.9 394.2,37.5 398.3,12.5" fill="none" stroke="#ffffff" stroke-width="1.76" stroke-linejoin="round" stroke-linecap="round"/><polyline points="394.2,37.5 408.8,62.5 421.2,79.2 427.5,95.8 421.2,129.2 421.2,166.7 433.8,175.0 448.3,172.9 454.6,133.3 450.4,104.2" fill="none" stroke="#cfccc6" stroke-width="2.92" stroke-linejoin="round" stroke-linecap="round"/><polyline points="394.2,37.5 408.8,62.5 421.2,79.2 427.5,95.8 421.2,129.2 421.2,166.7 433.8,175.0 448.3,172.9 454.6,133.3 450.4,104.2" fill="none" stroke="#ffffff" stroke-width="1.92" stroke-linejoin="round" stroke-linecap="round"/><polyline points="394.2,37.5 417.1,18.8 452.5,37.5 480.0,27.1" fill="none" stroke="#cfccc6" stroke-width="2.92" stroke-linejoin="round" stroke-linecap="round"/><polyline points="394.2,37.5 417.1,18.8 452.5,37.5 480.0,27.1" fill="none" stroke="#ffffff" stroke-width="1.92" stroke-linejoin="round" stroke-linecap="round"/><polyline points="421.2,8.3 452.5,37.5 427.5,95.8" fill="none" stroke="#cfccc6" stroke-width="2.6" stroke-linejoin="round" stroke-linecap="round"/><polyline points="421.2,8.3 452.5,37.5 427.5,95.8" fill="none" stroke="#ffffff" stroke-width="1.6" stroke-linejoin="round" stroke-linecap="round"/><polyline points="480.0,70.8 460.8,68.8 456.7,83.3 467.1,116.7 480.0,158.3" fill="none" stroke="#cfccc6" stroke-width="2.92" stroke-linejoin="round" stroke-linecap="round"/><polyline points="480.0,70.8 460.8,68.8 456.7,83.3 467.1,116.7 480.0,158.3" fill="none" stroke="#ffffff" stroke-width="1.92" stroke-linejoin="round" stroke-linecap="round"/><polyline points="385.8,225.0 406.7,208.3 427.5,204.2 440.0,187.5 480.0,162.5" fill="none" stroke="#cfccc6" stroke-width="3.08" stroke-linejoin="round" stroke-linecap="round"/><polyline points="385.8,225.0 406.7,208.3 427.5,204.2 440.0,187.5 480.0,162.5" fill="none" stroke="#ffffff" stroke-width="2.08" stroke-linejoin="round" stroke-linecap="round"/><polyline points="480.0,25.0 500.8,45.8 527.9,22.9 548.8,31.2 563.3,25.0" fill="none" stroke="#cfccc6" stroke-width="2.76" stroke-linejoin="round" stroke-linecap="round"/><polyline points="480.0,25.0 500.8,45.8 527.9,22.9 548.8,31.2 563.3,25.0" fill="none" stroke="#ffffff" stroke-width="1.76" stroke-linejoin="round" stroke-linecap="round"/><polyline points="500.8,4.2 530.0,41.7 532.1,58.3" fill="none" stroke="#cfccc6" stroke-width="2.76" stroke-linejoin="round" stroke-linecap="round"/><polyline points="500.8,4.2 530.0,41.7 532.1,58.3" fill="none" stroke="#ffffff" stroke-width="1.76" stroke-linejoin="round" stroke-linecap="round"/><polyline points="527.9,22.9 542.5,47.9 567.5,64.6 580.0,87.5 586.2,116.7 605.0,141.7 625.8,164.6 644.6,208.3" fill="none" stroke="#cfccc6" stroke-width="3.08" stroke-linejoin="round" stroke-linecap="round"/><polyline points="527.9,22.9 542.5,47.9 567.5,64.6 580.0,87.5 586.2,116.7 605.0,141.7 625.8,164.6 644.6,208.3" fill="none" stroke="#ffffff" stroke-width="2.08" stroke-linejoin="round" stroke-linecap="round"/><polyline points="607.1,2.1 602.9,52.1 611.2,87.5 609.2,116.7 605.0,141.7" fill="none" stroke="#cfccc6" stroke-width="3.08" stroke-linejoin="round" stroke-linecap="round"/><polyline points="607.1,2.1 602.9,52.1 611.2,87.5 609.2,116.7 605.0,141.7" fill="none" stroke="#ffffff" stroke-width="2.08" stroke-linejoin="round" stroke-linecap="round"/><polyline points="563.3,4.2 580.0,25.0 596.7,45.8" fill="none" stroke="#cfccc6" stroke-width="2.6" stroke-linejoin="round" stroke-linecap="round"/><polyline points="563.3,4.2 580.0,25.0 596.7,45.8" fill="none" stroke="#ffffff" stroke-width="1.6" stroke-linejoin="round" stroke-linecap="round"/><polyline points="480.0,75.0 511.2,72.9 513.3,100.0 480.0,108.3" fill="none" stroke="#cfccc6" stroke-width="2.76" stroke-linejoin="round" stroke-linecap="round"/><polyline points="480.0,75.0 511.2,72.9 513.3,100.0 480.0,108.3" fill="none" stroke="#ffffff" stroke-width="1.76" stroke-linejoin="round" stroke-linecap="round"/><polyline points="527.9,150.0 530.0,166.7 521.7,172.9 509.2,168.8" fill="none" stroke="#cfccc6" stroke-width="2.6" stroke-linejoin="round" stroke-linecap="round"/><polyline points="527.9,150.0 530.0,166.7 521.7,172.9 509.2,168.8" fill="none" stroke="#ffffff" stroke-width="1.6" stroke-linejoin="round" stroke-linecap="round"/><polyline points="480.0,152.1 496.7,150.0 480.0,187.5" fill="none" stroke="#cfccc6" stroke-width="2.76" stroke-linejoin="round" stroke-linecap="round"/><polyline points="480.0,152.1 496.7,150.0 480.0,187.5" fill="none" stroke="#ffffff" stroke-width="1.76" stroke-linejoin="round" stroke-linecap="round"/><polyline points="580.0,225.0 596.7,193.8 613.3,191.7 623.8,208.3 625.8,220.8" fill="none" stroke="#cfccc6" stroke-width="2.92" stroke-linejoin="round" stroke-linecap="round"/><polyline points="580.0,225.0 596.7,193.8 613.3,191.7 623.8,208.3 625.8,220.8" fill="none" stroke="#ffffff" stroke-width="1.92" stroke-linejoin="round" stroke-linecap="round"/><polyline points="642.5,154.2 675.8,164.6 688.3,193.8 696.7,225.0" fill="none" stroke="#cfccc6" stroke-width="2.76" stroke-linejoin="round" stroke-linecap="round"/><polyline points="642.5,154.2 675.8,164.6 688.3,193.8 696.7,225.0" fill="none" stroke="#ffffff" stroke-width="1.76" stroke-linejoin="round" stroke-linecap="round"/><polyline points="675.8,164.6 655.0,183.3 661.2,204.2 650.8,225.0" fill="none" stroke="#cfccc6" stroke-width="2.76" stroke-linejoin="round" stroke-linecap="round"/><polyline points="675.8,164.6 655.0,183.3 661.2,204.2 650.8,225.0" fill="none" stroke="#ffffff" stroke-width="1.76" stroke-linejoin="round" stroke-linecap="round"/><polyline points="682.1,172.9 711.2,158.3 717.5,166.7 688.3,187.5" fill="none" stroke="#cfccc6" stroke-width="2.6" stroke-linejoin="round" stroke-linecap="round"/><polyline points="682.1,172.9 711.2,158.3 717.5,166.7 688.3,187.5" fill="none" stroke="#ffffff" stroke-width="1.6" stroke-linejoin="round" stroke-linecap="round"/><polyline points="690.4,204.2 720.0,195.8" fill="none" stroke="#cfccc6" stroke-width="2.6" stroke-linejoin="round" stroke-linecap="round"/><polyline points="690.4,204.2 720.0,195.8" fill="none" stroke="#ffffff" stroke-width="1.6" stroke-linejoin="round" stroke-linecap="round"/><polyline points="688.3,225.0 711.2,256.2 720.0,245.8" fill="none" stroke="#cfccc6" stroke-width="2.76" stroke-linejoin="round" stroke-linecap="round"/><polyline points="688.3,225.0 711.2,256.2 720.0,245.8" fill="none" stroke="#ffffff" stroke-width="1.76" stroke-linejoin="round" stroke-linecap="round"/><polyline points="811.7,4.2 832.5,16.7 886.7,27.1 928.3,4.2" fill="none" stroke="#d5d2cc" stroke-width="2.6" stroke-linejoin="round" stroke-linecap="round"/><polyline points="811.7,4.2 832.5,16.7 886.7,27.1 928.3,4.2" fill="none" stroke="#ffffff" stroke-width="1.6" stroke-linejoin="round" stroke-linecap="round"/><polyline points="790.8,39.6 832.5,66.7 857.5,52.1 903.3,27.1 934.6,4.2" fill="none" stroke="#d5d2cc" stroke-width="2.6" stroke-linejoin="round" stroke-linecap="round"/><polyline points="790.8,39.6 832.5,66.7 857.5,52.1 903.3,27.1 934.6,4.2" fill="none" stroke="#ffffff" stroke-width="1.6" stroke-linejoin="round" stroke-linecap="round"/><polyline points="903.3,33.3 928.3,62.5 945.0,87.5 957.5,120.8" fill="none" stroke="#cfccc6" stroke-width="2.76" stroke-linejoin="round" stroke-linecap="round"/><polyline points="903.3,33.3 928.3,62.5 945.0,87.5 957.5,120.8" fill="none" stroke="#ffffff" stroke-width="1.76" stroke-linejoin="round" stroke-linecap="round"/><polyline points="903.3,135.4 957.5,124.0" fill="none" stroke="#cfccc6" stroke-width="5.2" stroke-linejoin="round" stroke-linecap="round"/><polyline points="903.3,135.4 957.5,124.0" fill="none" stroke="#ffffff" stroke-width="4.2" stroke-linejoin="round" stroke-linecap="round"/><polyline points="899.2,150.0 892.9,179.2 870.0,202.1" fill="none" stroke="#cfccc6" stroke-width="2.76" stroke-linejoin="round" stroke-linecap="round"/><polyline points="899.2,150.0 892.9,179.2 870.0,202.1" fill="none" stroke="#ffffff" stroke-width="1.76" stroke-linejoin="round" stroke-linecap="round"/><polyline points="920.0,172.9 895.0,214.6" fill="none" stroke="#cfccc6" stroke-width="2.76" stroke-linejoin="round" stroke-linecap="round"/><polyline points="920.0,172.9 895.0,214.6" fill="none" stroke="#ffffff" stroke-width="1.76" stroke-linejoin="round" stroke-linecap="round"/><polyline points="874.2,195.8 886.7,193.8 899.2,200.0" fill="none" stroke="#cfccc6" stroke-width="2.6" stroke-linejoin="round" stroke-linecap="round"/><polyline points="874.2,195.8 886.7,193.8 899.2,200.0" fill="none" stroke="#ffffff" stroke-width="1.6" stroke-linejoin="round" stroke-linecap="round"/><polyline points="740.8,2.1 742.9,62.5 745.0,108.3 732.5,187.5 726.2,225.0" fill="none" stroke="#cfccc6" stroke-width="2.92" stroke-linejoin="round" stroke-linecap="round"/><polyline points="740.8,2.1 742.9,62.5 745.0,108.3 732.5,187.5 726.2,225.0" fill="none" stroke="#ffffff" stroke-width="1.92" stroke-linejoin="round" stroke-linecap="round"/><polyline points="394.2,225.0 396.2,237.5 423.3,239.6 431.7,262.5 456.7,270.8" fill="none" stroke="#cfccc6" stroke-width="2.76" stroke-linejoin="round" stroke-linecap="round"/><polyline points="394.2,225.0 396.2,237.5 423.3,239.6 431.7,262.5 456.7,270.8" fill="none" stroke="#ffffff" stroke-width="1.76" stroke-linejoin="round" stroke-linecap="round"/><polyline points="469.2,225.0 456.7,262.5 454.6,304.2 431.7,327.1 440.0,333.3" fill="none" stroke="#cfccc6" stroke-width="2.92" stroke-linejoin="round" stroke-linecap="round"/><polyline points="469.2,225.0 456.7,262.5 454.6,304.2 431.7,327.1 440.0,333.3" fill="none" stroke="#ffffff" stroke-width="1.92" stroke-linejoin="round" stroke-linecap="round"/><polyline points="435.8,289.6 456.7,287.5 480.0,285.4" fill="none" stroke="#cfccc6" stroke-width="2.6" stroke-linejoin="round" stroke-linecap="round"/><polyline points="435.8,289.6 456.7,287.5 480.0,285.4" fill="none" stroke="#ffffff" stroke-width="1.6" stroke-linejoin="round" stroke-linecap="round"/><polyline points="431.7,304.2 480.0,337.5" fill="none" stroke="#cfccc6" stroke-width="2.92" stroke-linejoin="round" stroke-linecap="round"/><polyline points="431.7,304.2 480.0,337.5" fill="none" stroke="#ffffff" stroke-width="1.92" stroke-linejoin="round" stroke-linecap="round"/><polyline points="480.0,279.2 498.8,285.4 484.2,308.3" fill="none" stroke="#cfccc6" stroke-width="2.6" stroke-linejoin="round" stroke-linecap="round"/><polyline points="480.0,279.2 498.8,285.4 484.2,308.3" fill="none" stroke="#ffffff" stroke-width="1.6" stroke-linejoin="round" stroke-linecap="round"/><polyline points="494.6,316.7 480.0,354.2" fill="none" stroke="#cfccc6" stroke-width="2.76" stroke-linejoin="round" stroke-linecap="round"/><polyline points="494.6,316.7 480.0,354.2" fill="none" stroke="#ffffff" stroke-width="1.76" stroke-linejoin="round" stroke-linecap="round"/><polyline points="513.3,333.3 505.0,358.3 490.4,389.6 502.9,397.9 509.2,383.3" fill="none" stroke="#cfccc6" stroke-width="2.6" stroke-linejoin="round" stroke-linecap="round"/><polyline points="513.3,333.3 505.0,358.3 490.4,389.6 502.9,397.9 509.2,383.3" fill="none" stroke="#ffffff" stroke-width="1.6" stroke-linejoin="round" stroke-linecap="round"/><polyline points="575.8,225.0 561.2,250.0 523.8,277.1" fill="none" stroke="#cfccc6" stroke-width="3.08" stroke-linejoin="round" stroke-linecap="round"/><polyline points="575.8,225.0 561.2,250.0 523.8,277.1" fill="none" stroke="#ffffff" stroke-width="2.08" stroke-linejoin="round" stroke-linecap="round"/><polyline points="569.6,412.5 617.5,406.2" fill="none" stroke="#d5d2cc" stroke-width="2.6" stroke-linejoin="round" stroke-linecap="round"/><polyline points="569.6,412.5 617.5,406.2" fill="none" stroke="#ffffff" stroke-width="1.6" stroke-linejoin="round" stroke-linecap="round"/><polyline points="613.3,356.2 634.2,364.6 652.9,358.3" fill="none" stroke="#d5d2cc" stroke-width="2.6" stroke-linejoin="round" stroke-linecap="round"/><polyline points="613.3,356.2 634.2,364.6 652.9,358.3" fill="none" stroke="#ffffff" stroke-width="1.6" stroke-linejoin="round" stroke-linecap="round"/><polyline points="751.2,2.1 782.5,52.1 836.7,83.3 903.3,135.4 960.0,206.2" fill="none" stroke="#cfccc6" stroke-width="5" stroke-linejoin="round" stroke-linecap="round"/><polyline points="751.2,2.1 782.5,52.1 836.7,83.3 903.3,135.4 960.0,206.2" fill="none" stroke="#ffffff" stroke-width="4" stroke-linejoin="round" stroke-linecap="round"/><polyline points="782.5,52.1 836.7,83.3 903.3,135.4" fill="none" stroke="#c9a9cf" stroke-width="1.2" stroke-linejoin="round" stroke-linecap="round" stroke-dasharray="5 4"/><polyline points="720.0,68.8 667.5,112.5 646.7,133.3 638.3,166.7 644.6,208.3 652.9,225.0" fill="none" stroke="#cfccc6" stroke-width="6" stroke-linejoin="round" stroke-linecap="round"/><polyline points="720.0,68.8 667.5,112.5 646.7,133.3 638.3,166.7 644.6,208.3 652.9,225.0" fill="none" stroke="#ffffff" stroke-width="5" stroke-linejoin="round" stroke-linecap="round"/><polyline points="657.1,225.0 659.2,304.2 650.8,325.0 625.8,343.8 596.7,375.0 569.6,412.5 548.8,450.0" fill="none" stroke="#cfccc6" stroke-width="6.4" stroke-linejoin="round" stroke-linecap="round"/><polyline points="657.1,225.0 659.2,304.2 650.8,325.0 625.8,343.8 596.7,375.0 569.6,412.5 548.8,450.0" fill="none" stroke="#ffffff" stroke-width="5.4" stroke-linejoin="round" stroke-linecap="round"/><polyline points="480.0,66.7 505.0,60.4 546.7,59.4 548.8,41.7 569.6,27.1 596.7,50.0 625.8,39.6 642.5,47.9 680.0,93.8" fill="none" stroke="#b79cc4" stroke-width="1.3" stroke-linejoin="round" stroke-linecap="round" stroke-dasharray="6 3 2 3"/><polyline points="740.8,45.8 770.0,35.4 865.8,4.2" fill="none" stroke="#b79cc4" stroke-width="1.6" stroke-linejoin="round" stroke-linecap="round" stroke-dasharray="8 4 2 4"/><polyline points="352.5,8.3 337.9,62.5 329.6,91.7 369.2,79.2 398.3,70.8 402.5,87.5" fill="none" stroke="#b79cc4" stroke-width="1.2" stroke-linejoin="round" stroke-linecap="round" stroke-dasharray="4 3"/><polyline points="450.4,37.5 440.0,75.0 435.8,97.9" fill="none" stroke="#b79cc4" stroke-width="1.2" stroke-linejoin="round" stroke-linecap="round" stroke-dasharray="4 3"/><polyline points="373.3,272.9 355.6,285.4 365.0,360.4 373.3,437.5 302.5,450.0" fill="none" stroke="#9a88a8" stroke-width="1.2" stroke-linejoin="round" stroke-linecap="round" stroke-dasharray="6 3 1.5 3"/><polyline points="484.2,0.0 492.5,104.2 509.2,225.0 517.5,279.2 530.0,370.8 540.4,452.1" fill="none" stroke="#d4a25b" stroke-width="8.6" stroke-linejoin="round" stroke-linecap="round"/><polyline points="484.2,0.0 492.5,104.2 509.2,225.0 517.5,279.2 530.0,370.8 540.4,452.1" fill="none" stroke="#fcd6a4" stroke-width="6.6" stroke-linejoin="round" stroke-linecap="round"/><polyline points="477.5,2.1 480.0,37.5" fill="none" stroke="#fcd6a4" stroke-width="5" stroke-linejoin="round" stroke-linecap="round"/><polyline points="240.0,87.5 281.7,116.7 308.8,116.7 344.2,104.2 385.8,100.0 415.0,108.3" fill="none" stroke="#f19a88" stroke-width="1" stroke-linejoin="round" stroke-linecap="round" stroke-dasharray="1.7 2.1"/><polyline points="240.0,137.5 269.2,116.7 294.2,154.2 327.5,166.7" fill="none" stroke="#f19a88" stroke-width="1" stroke-linejoin="round" stroke-linecap="round" stroke-dasharray="1.7 2.1"/><polyline points="323.3,143.8 369.2,122.9 415.0,104.2" fill="none" stroke="#f19a88" stroke-width="1" stroke-linejoin="round" stroke-linecap="round" stroke-dasharray="1.7 2.1"/><polyline points="242.1,187.5 281.7,179.2 319.2,208.3 356.7,225.0" fill="none" stroke="#f19a88" stroke-width="1" stroke-linejoin="round" stroke-linecap="round" stroke-dasharray="1.7 2.1"/><polyline points="265.0,125.0 277.5,170.8 283.8,208.3 294.2,225.0" fill="none" stroke="#f19a88" stroke-width="1" stroke-linejoin="round" stroke-linecap="round" stroke-dasharray="1.7 2.1"/><polyline points="160.4,127.1 187.5,133.3 193.8,162.5 240.0,135.4" fill="none" stroke="#f19a88" stroke-width="1" stroke-linejoin="round" stroke-linecap="round" stroke-dasharray="1.7 2.1"/><polyline points="208.3,170.8 240.0,187.5" fill="none" stroke="#f19a88" stroke-width="1" stroke-linejoin="round" stroke-linecap="round" stroke-dasharray="1.7 2.1"/><polyline points="244.2,241.7 281.7,258.3 323.3,256.2 348.3,233.3" fill="none" stroke="#f19a88" stroke-width="1" stroke-linejoin="round" stroke-linecap="round" stroke-dasharray="1.7 2.1"/><polyline points="340.0,225.0 342.1,287.5 319.2,354.2 294.2,370.8" fill="none" stroke="#f19a88" stroke-width="1" stroke-linejoin="round" stroke-linecap="round" stroke-dasharray="1.7 2.1"/><polyline points="294.2,412.5 335.8,416.7 365.0,433.3" fill="none" stroke="#f19a88" stroke-width="1" stroke-linejoin="round" stroke-linecap="round" stroke-dasharray="1.7 2.1"/><polyline points="365.0,337.5 385.8,383.3 427.5,370.8 440.0,358.3 444.2,337.5" fill="none" stroke="#f19a88" stroke-width="1" stroke-linejoin="round" stroke-linecap="round" stroke-dasharray="1.7 2.1"/><polyline points="435.8,370.8 440.0,408.3 469.2,431.2 480.0,412.5" fill="none" stroke="#f19a88" stroke-width="1" stroke-linejoin="round" stroke-linecap="round" stroke-dasharray="1.7 2.1"/><polyline points="260.8,437.5 302.5,441.7 356.7,433.3" fill="none" stroke="#f19a88" stroke-width="1" stroke-linejoin="round" stroke-linecap="round" stroke-dasharray="1.7 2.1"/><polyline points="820.0,112.5 820.0,95.8 836.7,87.5 901.2,37.5" fill="none" stroke="#f19a88" stroke-width="1" stroke-linejoin="round" stroke-linecap="round" stroke-dasharray="1.7 2.1"/><polyline points="720.0,154.2 765.8,160.4 790.8,133.3 820.0,112.5 851.2,120.8" fill="none" stroke="#f19a88" stroke-width="1" stroke-linejoin="round" stroke-linecap="round" stroke-dasharray="1.7 2.1"/><polyline points="886.7,131.2 845.0,154.2 840.8,183.3 811.7,189.6 809.6,208.3 824.2,214.6 865.8,214.6" fill="none" stroke="#f19a88" stroke-width="1" stroke-linejoin="round" stroke-linecap="round" stroke-dasharray="1.7 2.1"/><polyline points="840.8,191.7 865.8,216.7" fill="none" stroke="#f19a88" stroke-width="1" stroke-linejoin="round" stroke-linecap="round" stroke-dasharray="1.7 2.1"/><polyline points="722.1,296.9 788.8,314.6 865.8,450.0" fill="none" stroke="#f19a88" stroke-width="1" stroke-linejoin="round" stroke-linecap="round" stroke-dasharray="1.7 2.1"/><polyline points="845.0,241.7 870.0,231.2 867.9,225.0" fill="none" stroke="#f19a88" stroke-width="1" stroke-linejoin="round" stroke-linecap="round" stroke-dasharray="1.7 2.1"/><polyline points="667.5,304.2 690.4,314.6 720.0,293.8" fill="none" stroke="#f19a88" stroke-width="1" stroke-linejoin="round" stroke-linecap="round" stroke-dasharray="1.7 2.1"/><polyline points="511.2,145.8 542.5,143.8 571.7,137.5 588.3,141.7" fill="none" stroke="#f19a88" stroke-width="1" stroke-linejoin="round" stroke-linecap="round" stroke-dasharray="1.7 2.1"/><polyline points="511.2,172.9 517.5,208.3 521.7,225.0" fill="none" stroke="#f19a88" stroke-width="1" stroke-linejoin="round" stroke-linecap="round" stroke-dasharray="1.7 2.1"/><polyline points="548.8,172.9 542.5,208.3 540.4,225.0" fill="none" stroke="#f19a88" stroke-width="1" stroke-linejoin="round" stroke-linecap="round" stroke-dasharray="1.7 2.1"/><polyline points="571.7,87.5 538.3,112.5 521.7,133.3" fill="none" stroke="#f19a88" stroke-width="1" stroke-linejoin="round" stroke-linecap="round" stroke-dasharray="1.7 2.1"/><polyline points="621.7,153.1 638.3,153.1" fill="none" stroke="#f19a88" stroke-width="1" stroke-linejoin="round" stroke-linecap="round" stroke-dasharray="1.7 2.1"/><polyline points="58.3,47.9 75.0,68.8 89.6,87.5 79.2,116.7 50.0,133.3" fill="none" stroke="#f19a88" stroke-width="1" stroke-linejoin="round" stroke-linecap="round" stroke-dasharray="1.7 2.1"/><polyline points="145.8,50.0 129.2,68.8 116.7,62.5 108.3,79.2" fill="none" stroke="#f19a88" stroke-width="1" stroke-linejoin="round" stroke-linecap="round" stroke-dasharray="1.7 2.1"/><polyline points="0.0,204.2 22.9,200.0 41.7,200.0" fill="none" stroke="#f19a88" stroke-width="1" stroke-linejoin="round" stroke-linecap="round" stroke-dasharray="1.7 2.1"/><polyline points="242.1,87.5 254.6,133.3 279.6,179.2 283.8,208.3 292.1,225.0" fill="none" stroke="#f19a88" stroke-width="1" stroke-linejoin="round" stroke-linecap="round" stroke-dasharray="1.7 2.1"/><polyline points="308.8,0.0 306.7,41.7 283.8,100.0 284.8,116.7" fill="none" stroke="#f19a88" stroke-width="1" stroke-linejoin="round" stroke-linecap="round" stroke-dasharray="1.7 2.1"/><polyline points="373.3,133.3 385.8,145.8 415.0,158.3" fill="none" stroke="#f19a88" stroke-width="1" stroke-linejoin="round" stroke-linecap="round" stroke-dasharray="1.7 2.1"/><polyline points="344.2,187.5 375.4,204.2 394.2,181.2" fill="none" stroke="#f19a88" stroke-width="1" stroke-linejoin="round" stroke-linecap="round" stroke-dasharray="1.7 2.1"/><polyline points="240.0,212.5 271.2,216.7 302.5,225.0" fill="none" stroke="#f19a88" stroke-width="1" stroke-linejoin="round" stroke-linecap="round" stroke-dasharray="1.7 2.1"/><polyline points="252.5,145.8 281.7,170.8 308.8,177.1 329.6,181.2" fill="none" stroke="#f19a88" stroke-width="1" stroke-linejoin="round" stroke-linecap="round" stroke-dasharray="1.7 2.1"/><polyline points="267.1,120.8 271.2,158.3 277.5,170.8" fill="none" stroke="#f19a88" stroke-width="1" stroke-linejoin="round" stroke-linecap="round" stroke-dasharray="1.7 2.1"/><polyline points="362.9,50.0 365.0,66.7 356.7,91.7" fill="none" stroke="#f19a88" stroke-width="1" stroke-linejoin="round" stroke-linecap="round" stroke-dasharray="1.7 2.1"/><polyline points="277.5,225.0 281.7,250.0 302.5,260.4 308.8,245.8 302.5,233.3" fill="none" stroke="#f19a88" stroke-width="1" stroke-linejoin="round" stroke-linecap="round" stroke-dasharray="1.7 2.1"/><polyline points="356.7,300.0 383.8,300.0" fill="none" stroke="#f19a88" stroke-width="1" stroke-linejoin="round" stroke-linecap="round" stroke-dasharray="1.7 2.1"/><polyline points="360.8,325.0 369.2,341.7 385.8,352.1" fill="none" stroke="#f19a88" stroke-width="1" stroke-linejoin="round" stroke-linecap="round" stroke-dasharray="1.7 2.1"/><polyline points="348.3,350.0 352.5,383.3 369.2,404.2 385.8,391.7" fill="none" stroke="#f19a88" stroke-width="1" stroke-linejoin="round" stroke-linecap="round" stroke-dasharray="1.7 2.1"/><polyline points="335.8,312.5 310.8,350.0 290.0,370.8" fill="none" stroke="#f19a88" stroke-width="1" stroke-linejoin="round" stroke-linecap="round" stroke-dasharray="1.7 2.1"/><polyline points="400.4,318.8 412.9,341.7 410.8,358.3" fill="none" stroke="#f19a88" stroke-width="1" stroke-linejoin="round" stroke-linecap="round" stroke-dasharray="1.7 2.1"/><polyline points="412.9,350.0 440.0,358.3 435.8,387.5 440.0,408.3 469.2,431.2" fill="none" stroke="#f19a88" stroke-width="1" stroke-linejoin="round" stroke-linecap="round" stroke-dasharray="1.7 2.1"/><polyline points="240.0,287.5 265.0,279.2 294.2,287.5" fill="none" stroke="#f19a88" stroke-width="1" stroke-linejoin="round" stroke-linecap="round" stroke-dasharray="1.7 2.1"/><polyline points="208.3,170.8 227.1,187.5 240.0,208.3" fill="none" stroke="#f19a88" stroke-width="1" stroke-linejoin="round" stroke-linecap="round" stroke-dasharray="1.7 2.1"/><polyline points="208.3,208.3 240.0,225.0" fill="none" stroke="#f19a88" stroke-width="1" stroke-linejoin="round" stroke-linecap="round" stroke-dasharray="1.7 2.1"/><polyline points="100.0,31.2 116.7,62.5 95.8,87.5" fill="none" stroke="#f19a88" stroke-width="1" stroke-linejoin="round" stroke-linecap="round" stroke-dasharray="1.7 2.1"/><polyline points="112.5,52.1 145.8,50.0 158.3,68.8 133.3,87.5" fill="none" stroke="#f19a88" stroke-width="1" stroke-linejoin="round" stroke-linecap="round" stroke-dasharray="1.7 2.1"/><polyline points="125.0,41.7 150.0,62.5" fill="none" stroke="#f19a88" stroke-width="1" stroke-linejoin="round" stroke-linecap="round" stroke-dasharray="1.7 2.1"/><polyline points="50.0,125.0 62.5,116.7 79.2,125.0 77.1,141.7" fill="none" stroke="#f19a88" stroke-width="1" stroke-linejoin="round" stroke-linecap="round" stroke-dasharray="1.7 2.1"/><polyline points="112.5,227.1 104.2,254.2 68.8,297.9 0.0,368.8" fill="none" stroke="#d9b08c" stroke-width="1.1" stroke-linejoin="round" stroke-linecap="round" stroke-dasharray="4 5"/><polyline points="331.7,225.0 321.2,293.8 294.2,337.5 277.5,391.7 260.8,450.0" fill="none" stroke="#a9a05a" stroke-width="1" stroke-linejoin="round" stroke-linecap="round" stroke-dasharray="6 4"/><polyline points="365.0,225.0 373.3,287.5 385.8,325.0 387.9,379.2" fill="none" stroke="#a9a05a" stroke-width="1" stroke-linejoin="round" stroke-linecap="round" stroke-dasharray="6 4"/><polyline points="331.7,183.3 331.7,225.0" fill="none" stroke="#a9a05a" stroke-width="1" stroke-linejoin="round" stroke-linecap="round" stroke-dasharray="6 4"/><polyline points="569.6,250.0 596.7,266.7 646.7,293.8" fill="none" stroke="#b59b62" stroke-width="0.9" stroke-linejoin="round" stroke-linecap="round" stroke-dasharray="4 3"/><polyline points="595.6,275.0 636.2,329.2" fill="none" stroke="#c79a6a" stroke-width="0.9" stroke-linejoin="round" stroke-linecap="round" stroke-dasharray="2 2"/><g font-family="DejaVu Sans, Liberation Sans, sans-serif"><text x="595.5" y="131.6" text-anchor="middle" font-size="14.4" fill="#757575" stroke="#fff" stroke-width="2" stroke-opacity=".7" paint-order="stroke" stroke-linejoin="round">Loverval</text><text x="254" y="385" text-anchor="middle" font-size="17.6" font-style="italic" fill="#587a53" fill-opacity=".85">Bois du</text><text x="254" y="408" text-anchor="middle" font-size="17.6" font-style="italic" fill="#587a53" fill-opacity=".85">Prince</text><text x="64" y="150.5" text-anchor="middle" font-size="10.6" fill="#9a5c2e" stroke="#fff" stroke-width="2" stroke-opacity=".7" paint-order="stroke" stroke-linejoin="round">Terril</text><text x="64" y="166.5" text-anchor="middle" font-size="10.6" fill="#9a5c2e" stroke="#fff" stroke-width="2" stroke-opacity=".7" paint-order="stroke" stroke-linejoin="round">223 m</text><path d="M60.2 138.6L65 130.2L69.8 138.6Z" fill="#d08a3c"/><text transform="translate(520.6 360.5) rotate(80.7)" text-anchor="middle" font-size="11.1" fill="#3d3526" stroke="#fff" stroke-width="2" stroke-opacity=".7" paint-order="stroke" stroke-linejoin="round">Chaussée de Philippeville</text><text transform="translate(482.6 29) rotate(85.4)" text-anchor="middle" font-size="11.1" fill="#3d3526" stroke="#fff" stroke-width="2" stroke-opacity=".7" paint-order="stroke" stroke-linejoin="round">Philippeville</text><path id="rbb" d="M647 226C652 258 658 288 647 316C636 334 626 340 618 348" fill="none"/><text font-size="9.4" fill="#333" stroke="#fff" stroke-width="2" stroke-opacity=".7" paint-order="stroke" stroke-linejoin="round"><textPath href="#rbb" startOffset="0">Rue de la Blanche Borne</textPath></text><text transform="translate(922.5 172) rotate(50.7)" text-anchor="middle" font-size="9.4" fill="#333" stroke="#fff" stroke-width="2" stroke-opacity=".7" paint-order="stroke" stroke-linejoin="round">Rue de Villers</text><text transform="translate(875 108.5) rotate(37)" text-anchor="middle" font-size="10.2" fill="#8f6a9d" stroke="#fff" stroke-width="2" stroke-opacity=".7" paint-order="stroke" stroke-linejoin="round">Châtelet</text><text transform="translate(8 314) rotate(-62)" text-anchor="middle" font-size="9.4" fill="#333" stroke="#fff" stroke-width="2" stroke-opacity=".7" paint-order="stroke" stroke-linejoin="round">Nalinnes</text></g></svg></div>
</div>
<div id="split" class="a"></div>
<div id="rt" class="a">
<div class="a" style="left:0;top:0;width:958px;height:2.7px;background:#7f7f7f"></div>
<div id="rthead" class="a" style="top:2.7px;height:49.3px"></div>
<div class="a" style="left:955.5px;top:0;width:2.5px;height:493px;background:#7f7f7f"></div>
<div class="a" style="left:949px;top:50px;width:3px;height:171px;background:#5a9299"></div>
<div class="t h h0" style="left:4.7px;top:4px;height:49px;line-height:49px;"><span style="display:inline-block;transform:scaleX(0.980);transform-origin:left center">Infos sur le/la bénéficiaire</span></div>
<div class="t h h1" style="left:288.6px;top:4px;height:49px;line-height:49px;"><span style="display:inline-block;transform:scaleX(0.995);transform-origin:left center">Clé : 202265121950631104</span></div>
<div class="t h h2" style="left:666.8px;top:4px;height:49px;line-height:49px;"><span style="display:inline-block;transform:scaleX(0.975);transform-origin:left center">Statut : Activé</span></div>
<div class="t lb" style="left:4.8px;top:49.45px;height:37.5px;line-height:37.5px;"><span style="display:inline-block;transform:scaleX(0.948);transform-origin:left center">Dernière mise à jour :</span></div>
<div class="t lb" style="left:288.6px;top:49.45px;height:37.5px;line-height:37.5px;"><span style="display:inline-block;transform:scaleX(0.924);transform-origin:left center">2022-06-05 12:19:50</span></div>
<div class="t lb" style="left:4.8px;top:86.95px;height:37.5px;line-height:37.5px;"><span style="display:inline-block;transform:scaleX(0.957);transform-origin:left center">Référence dossier :</span></div>
<div class="f" style="left:290px;top:88.7px;width:470.5px;height:33.9px"><span style="display:inline-block;transform:scaleX(0.948);transform-origin:left center">PV 99999/99</span></div>
<div class="t lb" style="left:4.8px;top:124.45px;height:37.5px;line-height:37.5px;"><span style="display:inline-block;transform:scaleX(0.948);transform-origin:left center">Echéance du suivi :</span></div>
<div class="f" style="left:290px;top:126.2px;width:470.5px;height:33.9px"><span style="display:inline-block;transform:scaleX(0.893);transform-origin:left center">2022-12-31</span></div>
<div class="t lb" style="left:778.6px;top:124.45px;height:37.5px;line-height:37.5px;"><span style="display:inline-block;transform:scaleX(0.948);transform-origin:left center">Format</span></div>
<div class="t lb" style="left:857.5px;top:124.45px;height:37.5px;line-height:37.5px;"><span style="display:inline-block;transform:scaleX(0.948);transform-origin:left center">aaaa-mm-jj</span></div>
<div class="t lb" style="left:4.8px;top:161.95px;height:37.5px;line-height:37.5px;"><span style="display:inline-block;transform:scaleX(0.974);transform-origin:left center">Nom:</span></div>
<div class="f" style="left:290px;top:163.7px;width:470.5px;height:33.9px"><span style="display:inline-block;transform:scaleX(0.915);transform-origin:left center">TESTWOMAN</span></div>
<div class="t lb" style="left:4.8px;top:199.45px;height:37.5px;line-height:37.5px;"><span style="display:inline-block;transform:scaleX(0.948);transform-origin:left center">Prénom:</span></div>
<div class="f" style="left:290px;top:201.2px;width:470.5px;height:33.9px"><span style="display:inline-block;transform:scaleX(0.964);transform-origin:left center">Marie</span></div>
<div class="t lb" style="left:4.8px;top:236.95px;height:37.5px;line-height:37.5px;"><span style="display:inline-block;transform:scaleX(0.958);transform-origin:left center">Date naissance:</span></div>
<div class="f" style="left:290px;top:238.7px;width:470.5px;height:33.9px"><span style="display:inline-block;transform:scaleX(0.993);transform-origin:left center">11/11/1981</span></div>
<div class="a gbtn" style="left:5.5px;top:275.45px;width:281.5px;height:35px"></div>
<div class="t lb" style="left:4.8px;top:274.45px;height:37.5px;line-height:37.5px;"><span style="display:inline-block;transform:scaleX(0.948);transform-origin:left center">Adresse:</span></div>
<div class="f" style="left:290px;top:276.2px;width:470.5px;height:33.9px"><span style="display:inline-block;transform:scaleX(0.937);transform-origin:left center">Place de Bracquegnies 1 7110 LA LOUVIERE</span></div>
<div class="d d1" style="left:762.7px;top:275.45px;width:92.6px;height:34.9px;line-height:35.9px"><i></i>!</div>
<div class="d d1" style="left:858.3px;top:275.45px;width:92.1px;height:34.9px;line-height:35.9px"><i></i>MAJ</div>
<div class="t lb" style="left:4.8px;top:311.95px;height:112.5px;line-height:112.5px;"><span style="display:inline-block;transform:scaleX(0.980);transform-origin:left center">Enfants à la maison:</span></div>
<div class="f" style="left:290px;top:313.7px;width:470.5px;height:108.9px"><span style="display:inline-block;transform:scaleX(0.962);transform-origin:left center">Non</span></div>
<div class="d d1" style="left:762.7px;top:312.95px;width:92.6px;height:109.9px;line-height:110.9px">!</div>
<div class="d d1" style="left:858.3px;top:312.95px;width:92.1px;height:109.9px;line-height:110.9px">MAJ</div>
<div class="t lb" style="left:4.8px;top:424.45px;height:37.5px;line-height:37.5px;"><span style="display:inline-block;transform:scaleX(0.948);transform-origin:left center">Gsm:</span></div>
<div class="f" style="left:290px;top:426.2px;width:470.5px;height:33.9px"><span style="display:inline-block;transform:scaleX(0.948);transform-origin:left center">0999/99.99.99</span></div>
<div class="d d1" style="left:762.7px;top:425.45px;width:92.6px;height:34.9px;line-height:35.9px"><i></i>!</div>
<div class="d d1" style="left:858.3px;top:425.45px;width:92.1px;height:34.9px;line-height:35.9px"><i></i>MAJ</div>
<div class="t lb" style="left:4.8px;top:461.95px;height:37.5px;line-height:37.5px;"><span style="display:inline-block;transform:scaleX(0.965);transform-origin:left center">Téléphone fixe:</span></div>
<div class="f" style="left:290px;top:463.7px;width:470.5px;height:33.9px"><span style="display:inline-block;transform:scaleX(0.948);transform-origin:left center">099/99.99.99</span></div>
<div class="d d1" style="left:762.7px;top:462.95px;width:92.6px;height:34.9px;line-height:35.9px"><i></i>!</div>
<div class="d d1" style="left:858.3px;top:462.95px;width:92.1px;height:34.9px;line-height:35.9px"><i></i>MAJ</div>
<div class="a" style="left:0;top:489.3px;width:955.5px;height:4px;background:#377c85;z-index:3"></div>
</div>
<div id="rb" class="a">
<div id="rbhead" class="a"></div>
<div class="t lb hb" style="left:8.6px;top:2.7px;height:42.5px;line-height:42.5px;font-size:19.8px;color:#f2f7f7">Infos sur la personne crainte</div>
<div class="t lb" style="left:9.3px;top:48.45px;height:37.5px;line-height:37.5px;"><span style="display:inline-block;transform:scaleX(0.974);transform-origin:left center">Nom:</span></div>
<div class="f" style="left:294.5px;top:50.2px;width:470.5px;height:33.9px"><span style="display:inline-block;transform:scaleX(0.891);transform-origin:left center">ESTSUSPECT</span></div>
<div class="d d2" style="left:767.2px;top:49.45px;width:92.6px;height:34.9px;line-height:35.9px"><i></i>!</div>
<div class="d d2" style="left:862.8px;top:49.45px;width:92.1px;height:34.9px;line-height:35.9px"><i></i>MAJ</div>
<div class="t lb" style="left:9.3px;top:85.95px;height:37.5px;line-height:37.5px;"><span style="display:inline-block;transform:scaleX(0.948);transform-origin:left center">Prénom:</span></div>
<div class="f" style="left:294.5px;top:87.7px;width:470.5px;height:33.9px"><span style="display:inline-block;transform:scaleX(0.948);transform-origin:left center">Jean</span></div>
<div class="d d2" style="left:767.2px;top:86.95px;width:92.6px;height:34.9px;line-height:35.9px"><i></i>!</div>
<div class="d d2" style="left:862.8px;top:86.95px;width:92.1px;height:34.9px;line-height:35.9px"><i></i>MAJ</div>
<div class="t lb" style="left:9.3px;top:123.45px;height:37.5px;line-height:37.5px;"><span style="display:inline-block;transform:scaleX(0.958);transform-origin:left center">Date naissance:</span></div>
<div class="f" style="left:294.5px;top:125.2px;width:470.5px;height:33.9px"><span style="display:inline-block;transform:scaleX(0.976);transform-origin:left center">04/02/1980</span></div>
<div class="d d2" style="left:767.2px;top:124.45px;width:92.6px;height:34.9px;line-height:35.9px"><i></i>!</div>
<div class="d d2" style="left:862.8px;top:124.45px;width:92.1px;height:34.9px;line-height:35.9px"><i></i>MAJ</div>
<div class="a gbtn" style="left:10px;top:161.95px;width:281.5px;height:35px"></div>
<div class="t lb" style="left:9.3px;top:160.95px;height:37.5px;line-height:37.5px;"><span style="display:inline-block;transform:scaleX(0.948);transform-origin:left center">Adresse:</span></div>
<div class="f" style="left:294.5px;top:162.7px;width:470.5px;height:33.9px"><span style="display:inline-block;transform:scaleX(0.934);transform-origin:left center">Place de Haine-Saint-Paul 7100 LA LOUVIERE</span></div>
<div class="d d2" style="left:767.2px;top:161.95px;width:92.6px;height:34.9px;line-height:35.9px"><i></i>!</div>
<div class="d d2" style="left:862.8px;top:161.95px;width:92.1px;height:34.9px;line-height:35.9px"><i></i>MAJ</div>
<div class="t lb" style="left:9.3px;top:198.45px;height:37.5px;line-height:37.5px;"><span style="display:inline-block;transform:scaleX(0.948);transform-origin:left center">Gsm:</span></div>
<div class="f" style="left:294.5px;top:200.2px;width:470.5px;height:33.9px"><span style="display:inline-block;transform:scaleX(0.948);transform-origin:left center">0888/88.88.88</span></div>
<div class="d d2" style="left:767.2px;top:199.45px;width:92.6px;height:34.9px;line-height:35.9px"><i></i>!</div>
<div class="d d2" style="left:862.8px;top:199.45px;width:92.1px;height:34.9px;line-height:35.9px"><i></i>MAJ</div>
<div class="t lb" style="left:9.3px;top:235.95px;height:37.5px;line-height:37.5px;"><span style="display:inline-block;transform:scaleX(0.965);transform-origin:left center">Téléphone fixe:</span></div>
<div class="f" style="left:294.5px;top:237.7px;width:470.5px;height:33.9px"><span style="display:inline-block;transform:scaleX(0.948);transform-origin:left center">088/88.88.88</span></div>
<div class="d d2" style="left:767.2px;top:236.95px;width:92.6px;height:34.9px;line-height:35.9px"><i></i>!</div>
<div class="d d2" style="left:862.8px;top:236.95px;width:92.1px;height:34.9px;line-height:35.9px"><i></i>MAJ</div>
<div class="t lb" style="left:9.3px;top:273.45px;height:37.5px;line-height:37.5px;"><span style="display:inline-block;transform:scaleX(0.948);transform-origin:left center">Email:</span></div>
<div class="f" style="left:294.5px;top:275.2px;width:470.5px;height:33.9px"><span style="display:inline-block;transform:scaleX(0.974);transform-origin:left center">suspect@justice.be</span></div>
<div class="d d2" style="left:767.2px;top:274.45px;width:92.6px;height:34.9px;line-height:35.9px"><i></i>!</div>
<div class="d d2" style="left:862.8px;top:274.45px;width:92.1px;height:34.9px;line-height:35.9px"><i></i>MAJ</div>
<div class="t lb" style="left:9.3px;top:310.95px;height:75px;line-height:75px;"><span style="display:inline-block;transform:scaleX(0.974);transform-origin:left center">Arme(s) RCA/signalée(s):</span></div>
<div class="f" style="left:294.5px;top:312.7px;width:470.5px;height:71.4px"><span style="display:inline-block;transform:scaleX(0.973);transform-origin:left center">Aurait un opinel dans la portière conducteur de sa<br>voiture</span></div>
<div class="d d2" style="left:767.2px;top:311.95px;width:92.6px;height:72.4px;line-height:73.4px">!</div>
<div class="d d2" style="left:862.8px;top:311.95px;width:92.1px;height:72.4px;line-height:73.4px">MAJ</div>
<div class="t lb" style="left:9.3px;top:385.95px;height:112.5px;line-height:112.5px;"><span style="display:inline-block;transform:scaleX(0.983);transform-origin:left center">Complice(s) éventuel(s):</span></div>
<div class="f" style="left:294.5px;top:387.7px;width:470.5px;height:108.9px"><span style="display:inline-block;transform:scaleX(0.962);transform-origin:left center">Non</span></div>
<div class="d d2" style="left:767.2px;top:386.95px;width:92.6px;height:109.9px;line-height:110.9px">!</div>
<div class="d d2" style="left:862.8px;top:386.95px;width:92.1px;height:109.9px;line-height:110.9px">MAJ</div>
<div class="a" style="left:960.3px;top:42.5px;width:2.2px;height:407px;background:#1a8085"></div>
</div>
<div class="a" style="left:865px;top:27px;width:95px;height:54.8px;border:4.8px solid #ed1c24"></div>
<div id="bb" class="a">
<div class="a" style="left:0;top:0;width:1920px;height:1.2px;background:#9a9a9a"></div>
<div class="bbtn" style="left:1.2px;width:323.8px"><span style="display:inline-block;transform:scaleX(0.926)">GESTION ALERTE/COMPTE</span></div>
<div class="bbtn" style="left:327.7px;width:314px"><span style="display:inline-block;transform:scaleX(0.914)">MONITORING BENEFICIAIRE</span></div>
<div class="bbtn" style="left:644.4px;width:313.9px"><span style="display:inline-block;transform:scaleX(0.884)">RESET</span></div>
<div class="bbtn" style="left:961.5px;width:317.7px"><span style="display:inline-block;transform:scaleX(0.87)">REFRESH</span></div>
<div class="bbtn" style="left:1281.8px;width:317.4px"><span style="display:inline-block;transform:scaleX(0.913)">AJOUTER</span></div>
<div class="bbtn" style="left:1601.8px;width:316.5px"><span style="display:inline-block;transform:scaleX(0.903)">MODIFIER</span></div>
</div>
<div id="task" class="a">
<svg style="left:24px;top:16px" width="34" height="24" viewBox="0 0 34 24"><defs><linearGradient id="wc" x1="0" y1="0" x2="0" y2="1"><stop offset="0" stop-color="#ffffff"/><stop offset="1" stop-color="#b9cff0"/></linearGradient></defs><path d="M8 22 C3.8 22 1.6 19.4 1.6 16.4 C1.6 13.4 3.8 11.2 6.6 11 C7 6 10.6 2.6 15.4 2.6 C19.4 2.6 22.4 4.8 23.8 8.2 C28.4 7.8 32.2 11 32.2 15.2 C32.2 19 29.2 22 25.2 22Z" fill="url(#wc)"/></svg>
<div class="t" style="left:65px;top:12.5px;font-size:14.6px;line-height:18px;color:#fff"><span style="display:inline-block;transform:scaleX(.92);transform-origin:left center">16°C</span></div>
<div class="t" style="left:65px;top:32px;font-size:14.6px;line-height:18px;color:#e4e4e4"><span style="display:inline-block;transform:scaleX(1.027);transform-origin:left center">Nuageux</span></div>
<div class="a" style="left:1376px;top:5px;width:50px;height:51px;border-radius:5px;background:#2d2d2d;border:1px solid #383838"></div>
<svg style="left:0;top:0" width="1920" height="60" viewBox="0 0 1920 60">
<defs><linearGradient id="wl" x1="0" y1="0" x2="1" y2="1"><stop offset="0" stop-color="#6fd2ff"/><stop offset="1" stop-color="#0a86e0"/></linearGradient></defs><g fill="url(#wl)"><rect x="506.5" y="16.3" width="13.6" height="13.6" rx="1"/><rect x="521.6" y="16.3" width="13.6" height="13.6" rx="1"/><rect x="506.5" y="31.4" width="13.6" height="13.6" rx="1"/><rect x="521.6" y="31.4" width="13.6" height="13.6" rx="1"/></g><circle cx="577.6" cy="27.6" r="10.2" fill="#2b2b2b" stroke="#ececec" stroke-width="3"/><path d="M570.4 35.6L564.4 42.4" stroke="#dcdcdc" stroke-width="3.6" stroke-linecap="round"/><rect x="616" y="24" width="22.5" height="20" rx="2" fill="#7b7b7b"/><rect x="623.5" y="16.5" width="22.5" height="20" rx="2" fill="#f4f4f4"/><rect x="623.5" y="24" width="15" height="12.5" fill="#c9c9c9"/><path d="M685.8 16 A14 14 0 1 1 676.5 40.6 L671.8 44.2 L672.8 36.4 A14 14 0 0 1 685.8 16Z" fill="#7a6ad8"/><rect x="677.4" y="24.6" width="12" height="10.4" rx="2" fill="#fff"/><path d="M690.4 28.6L695 25.6V34L690.4 31Z" fill="#fff"/><path d="M734.6 20V17.6Q734.6 15 737.2 15H744.8Q747.4 15 747.4 17.6V20" fill="none" stroke="#35b5ee" stroke-width="2.2"/><path d="M726.4 20H755.2V41Q755.2 44.8 751.4 44.8H730.2Q726.4 44.8 726.4 41Z" fill="#f3f3f3"/><rect x="734.6" y="25.8" width="5.4" height="5.4" fill="#f25022"/><rect x="741.2" y="25.8" width="5.4" height="5.4" fill="#7fba00"/><rect x="734.6" y="32.4" width="5.4" height="5.4" fill="#00a4ef"/><rect x="741.2" y="32.4" width="5.4" height="5.4" fill="#ffb900"/><path d="M781.4 19.4Q781.4 17.2 783.6 17.2H791.4L794.6 20.2H808.8Q811 20.2 811 22.4V42.4Q811 44.4 809 44.4H783.4Q781.4 44.4 781.4 42.4Z" fill="#f0b429"/><path d="M781.4 24.4Q781.4 22.6 783.2 22.6H809.2Q811 22.6 811 24.4V42.6Q811 44.4 809.2 44.4H783.2Q781.4 44.4 781.4 42.6Z" fill="#ffd45c"/><path d="M786.6 44.4V40.2Q786.6 37 789.8 37H802.6Q805.8 37 805.8 40.2V44.4Z" fill="#1687d9"/><rect x="790.6" y="39.6" width="11.2" height="1.8" rx=".9" fill="#0d5ea6"/><circle cx="851" cy="30" r="13.8" fill="#fafafa"/><path d="M843.6 36.6L848.6 23.6H854L858.6 36.6H855L851.2 26.6L847.2 36.6Z" fill="#3b78e0"/><path d="M846.6 24.4Q851 19.6 855.6 24.4Z" fill="#3dbb74"/><path d="M851 26V38.4M853.8 30.4V38.4" stroke="#15283a" stroke-width="1.6"/><rect x="891" y="15.6" width="29.4" height="29.4" fill="#b3090b" stroke="#d23033" stroke-width="1" stroke-dasharray="1.6 1.2"/><text x="905.8" y="38.4" text-anchor="middle" font-family="Liberation Sans,sans-serif" font-weight="bold" font-style="italic" font-size="23" fill="#fff" letter-spacing="-1.5">Fz</text><defs><linearGradient id="eg" x1="0" y1="0" x2="1" y2="0"><stop offset="0" stop-color="#2a8fd8"/><stop offset=".6" stop-color="#35c1b8"/><stop offset="1" stop-color="#7bd848"/></linearGradient></defs><circle cx="961" cy="30" r="14.6" fill="#1568b8"/><path d="M946.6 27.6A14.6 14.6 0 0 1 975.6 29.6C975.6 35 971 37 967.6 36.4C970 34 969.6 28.4 963 26.4C955.8 24.4 948.6 27.6 946.6 33Z" fill="url(#eg)"/><path d="M953.6 33.6C953.6 29 958 26.6 962 27.6C957.6 30 958.6 37.6 966.6 39.4C962.6 43 953.6 40.6 953.6 33.6Z" fill="#0c3f86"/><circle cx="1016" cy="32" r="13.6" fill="#1b8fd6" stroke="#f2f2f2" stroke-width="2.4"/><text x="1015.6" y="39.4" text-anchor="middle" font-family="Liberation Sans,sans-serif" font-weight="bold" font-size="20" fill="#fff">?</text><circle cx="1027" cy="19.6" r="10" fill="#fcc419"/><path d="M1077.6 16L1085.8 19.4V40.6L1077.6 44L1062.4 30Z" fill="#2aa6f2"/><path d="M1077.6 16V44L1085.8 40.6V19.4Z" fill="#1680cf"/><path d="M1056.6 23.4L1059.4 21L1077.6 35.6V44Z" fill="#1d8fe0"/><path d="M1056.6 36.6L1059.4 39L1077.6 24.4V16Z" fill="#32aef5"/><path d="M1068.6 30L1077.6 23.4V36.6Z" fill="#1c1c1c"/><rect x="1114.6" y="17.6" width="22.8" height="26.6" rx="1.6" fill="#4fc3f0"/><rect x="1114.6" y="42" width="22.8" height="2.8" fill="#b5651d"/><g fill="#1b83b8"><circle cx="1118.6" cy="17" r="1.7"/><circle cx="1123.6" cy="17" r="1.7"/><circle cx="1128.6" cy="17" r="1.7"/><circle cx="1133.6" cy="17" r="1.7"/><rect x="1118.4" y="23.4" width="15.2" height="2.2"/><rect x="1118.4" y="28" width="15.2" height="2.2"/><rect x="1118.4" y="32.6" width="15.2" height="2.2"/><rect x="1118.4" y="37.2" width="15.2" height="2.2"/></g><path d="M1179 15.6L1191.6 21V36L1179 42.6L1166.4 36V21Z" fill="#1f3f7a"/><path d="M1179 15.6L1191.6 21L1179 26.6L1166.4 21Z" fill="#dfe7f4"/><path d="M1179 26.6V42.6L1191.6 36V21Z" fill="#9fb3d6"/><path d="M1169 23.6L1179 28V39.4L1169 34.6Z" fill="#23467f"/><path d="M1189 23.6L1179 28V39.4L1189 34.6Z" fill="#1b355f"/><path d="M1179 15.6L1191.6 21V36L1179 42.6L1166.4 36V21Z" fill="none" stroke="#e8eef8" stroke-width="1.8"/><ellipse cx="1179" cy="44.4" rx="7" ry="2" fill="#6070a0"/><rect x="1221" y="15.6" width="30" height="29.4" rx="2" fill="#3a3f52"/><path d="M1225 45C1232 38 1236 34 1238 27C1240 21 1244 18 1251 17V27C1246 28 1244 32 1243 36C1241 41 1238 44 1233 45Z" fill="#f8ab3a"/><circle cx="1233" cy="27" r="5.4" fill="#e8501a"/><rect x="1221.6" y="16.2" width="10.6" height="7.2" fill="#f4f4f4"/><text x="1226.9" y="22.4" text-anchor="middle" font-family="Liberation Sans,sans-serif" font-weight="bold" font-size="6.6" fill="#222">64</text><rect x="1276" y="19" width="30" height="22.4" rx="2" fill="#3b3b3b"/><rect x="1276" y="19" width="30" height="4.6" fill="#7d7d7d"/><rect x="1276" y="19" width="10" height="4.6" fill="#b5b5b5"/><path d="M1280.6 28.4L1286 32.2L1280.6 36" fill="none" stroke="#f4f4f4" stroke-width="2"/><rect x="1288.4" y="34.8" width="10" height="2.2" fill="#f4f4f4"/><path d="M1345 16.6C1354 16.6 1360 22 1360 29C1360 34 1356 35.6 1352.6 35C1349 34.4 1347.4 36.4 1348.6 39C1349.8 41.6 1348 44 1344.6 44C1337 44 1331.6 38 1331.6 30.6C1331.6 22.6 1337.4 16.6 1345 16.6Z" fill="#2ba3e6"/><circle cx="1338.6" cy="27" r="2.5" fill="#e8412c"/><circle cx="1344.6" cy="22" r="2.5" fill="#f6c026"/><circle cx="1351.6" cy="23.6" r="2.5" fill="#6cc04a"/><circle cx="1338" cy="35" r="2.5" fill="#1c4f9c"/><path d="M1352.6 22.4H1356.4L1355.8 29H1353.2Z" fill="#e8d9b0"/><rect x="1353.4" y="29" width="2.2" height="15" fill="#9b5a2a"/><rect x="1387" y="16.6" width="27" height="22" fill="#2f3d4a"/><rect x="1387" y="16.6" width="27" height="3" fill="#3c7fc4"/><g fill="#3fb56a"><rect x="1389.6" y="22.6" width="9" height="1.4"/><rect x="1389.6" y="25.8" width="6.4" height="1.4"/><rect x="1389.6" y="29" width="8" height="1.4"/></g><path d="M1401.6 27.6Q1401.6 24.6 1404.6 24.6H1408.4Q1411.4 24.6 1411.4 27.6V31.4Q1411.4 33.6 1409.2 33.6H1403.6Q1401.6 33.6 1401.6 35.6V37H1398.6Q1396.6 37 1396.6 34V32Q1396.6 29.6 1399 29.6H1406.4V28.6H1401.6Z" fill="#4b8fd0"/><path d="M1411.6 42Q1411.6 45 1408.6 45H1404.8Q1401.8 45 1401.8 42V38.2Q1401.8 36 1404 36H1409.6Q1411.6 36 1411.6 34V32.6H1414.6Q1416.6 32.6 1416.6 35.6V37.6Q1416.6 40 1414.2 40H1406.8V41H1411.6Z" fill="#ffd84a"/><path d="M1566 33.8L1574 26.2L1582 33.8" fill="none" stroke="#f0f0f0" stroke-width="1.5"/><path d="M1608.6 36.6C1605.6 36.6 1604 34.8 1604 32.8C1604 30.8 1605.4 29.4 1607.4 29.2C1607.8 26.2 1610.2 24 1613.2 24C1615.6 24 1617.4 25.2 1618.4 27C1621.8 26.6 1624.6 28.8 1624.6 31.8C1624.6 34.6 1622.4 36.6 1619.6 36.6Z" fill="#e6e6e6"/><path d="M1604.2 33.4L1618 27L1624.4 32.4C1624 35 1622 36.6 1619.6 36.6H1608.6C1606 36.6 1604.4 35.2 1604.2 33.4Z" fill="#bcbcbc"/><g fill="none" stroke="#f2f2f2" stroke-width="1.6" stroke-linecap="round"><path d="M1699 27.4C1704.8 21.6 1712.8 21.6 1718.6 27.4"/><path d="M1702.2 30.8C1706 27 1711.6 27 1715.4 30.8"/><path d="M1705.4 34C1707.4 32 1710.2 32 1712.2 34"/></g><circle cx="1708.8" cy="37.2" r="1.6" fill="#f2f2f2"/><path d="M1729.6 27.4H1733L1738 23V37L1733 32.6H1729.6Z" fill="none" stroke="#f2f2f2" stroke-width="1.4" stroke-linejoin="round"/><g fill="none" stroke-linecap="round" stroke-width="1.4"><path d="M1740.6 27C1742 28.6 1742 31.4 1740.6 33" stroke="#f2f2f2"/><path d="M1743 24.6C1745.8 27.6 1745.8 32.4 1743 35.4" stroke="#f2f2f2"/><path d="M1745.6 22.4C1749.4 26.6 1749.4 33.4 1745.6 37.6" stroke="#777"/></g><rect x="1764" y="25" width="13" height="11.6" rx="1.6" fill="none" stroke="#f2f2f2" stroke-width="1.5"/><rect x="1777.6" y="28.4" width="2" height="5" fill="#f2f2f2"/><rect x="1765.8" y="27" width="7" height="7.8" fill="#f2f2f2"/><path d="M1760 22.6V25.4M1763.4 22.6V25.4" stroke="#f2f2f2" stroke-width="1.3"/><path d="M1759 25.4H1764.4V28Q1764.4 30.2 1761.7 30.2Q1759 30.2 1759 28Z" fill="#f2f2f2"/><path d="M1761.7 30V33.6H1764" stroke="#f2f2f2" stroke-width="1.2" fill="none"/>
</svg>
<div class="a" style="left:792.5px;top:51px;width:7px;height:3px;border-radius:1.5px;background:#9a9a9a"></div>
<div class="a" style="left:902.5px;top:51px;width:7px;height:3px;border-radius:1.5px;background:#9a9a9a"></div>
<div class="a" style="left:957.5px;top:51px;width:7px;height:3px;border-radius:1.5px;background:#9a9a9a"></div>
<div class="a" style="left:1067.5px;top:51px;width:7px;height:3px;border-radius:1.5px;background:#9a9a9a"></div>
<div class="a" style="left:1122.5px;top:51px;width:7px;height:3px;border-radius:1.5px;background:#9a9a9a"></div>
<div class="a" style="left:1177.5px;top:51px;width:7px;height:3px;border-radius:1.5px;background:#9a9a9a"></div>
<div class="a" style="left:1232.5px;top:51px;width:7px;height:3px;border-radius:1.5px;background:#9a9a9a"></div>
<div class="a" style="left:1287.5px;top:51px;width:7px;height:3px;border-radius:1.5px;background:#9a9a9a"></div>
<div class="a" style="left:1342.5px;top:51px;width:7px;height:3px;border-radius:1.5px;background:#9a9a9a"></div>
<div class="a" style="left:1391px;top:50.5px;width:20px;height:3.5px;border-radius:2px;background:#4cc2ff"></div>
<div class="t" style="left:1631px;top:10.8px;width:60px;text-align:center;font-size:14.6px;line-height:20px;color:#fff"><span style="display:inline-block;transform:scaleX(.87)">FRA</span><br><span style="display:inline-block;transform:scaleX(.85)">BEFR</span></div>
<div class="t" style="left:1761px;top:10px;width:100.4px;text-align:right;font-size:14.8px;line-height:20px;color:#fff"><span style="display:inline-block;transform:scaleX(.89);transform-origin:right center">21:09</span><br><span style="display:inline-block;transform:scaleX(1.03);transform-origin:right center">05-06-22</span></div>
<div class="a" style="left:1876px;top:20.5px;width:20px;height:20px;border-radius:10px;background:#4cc2ff;color:#10202a;font-size:13.5px;line-height:20px;text-align:center">2</div>
</div>
</div></body></html>
